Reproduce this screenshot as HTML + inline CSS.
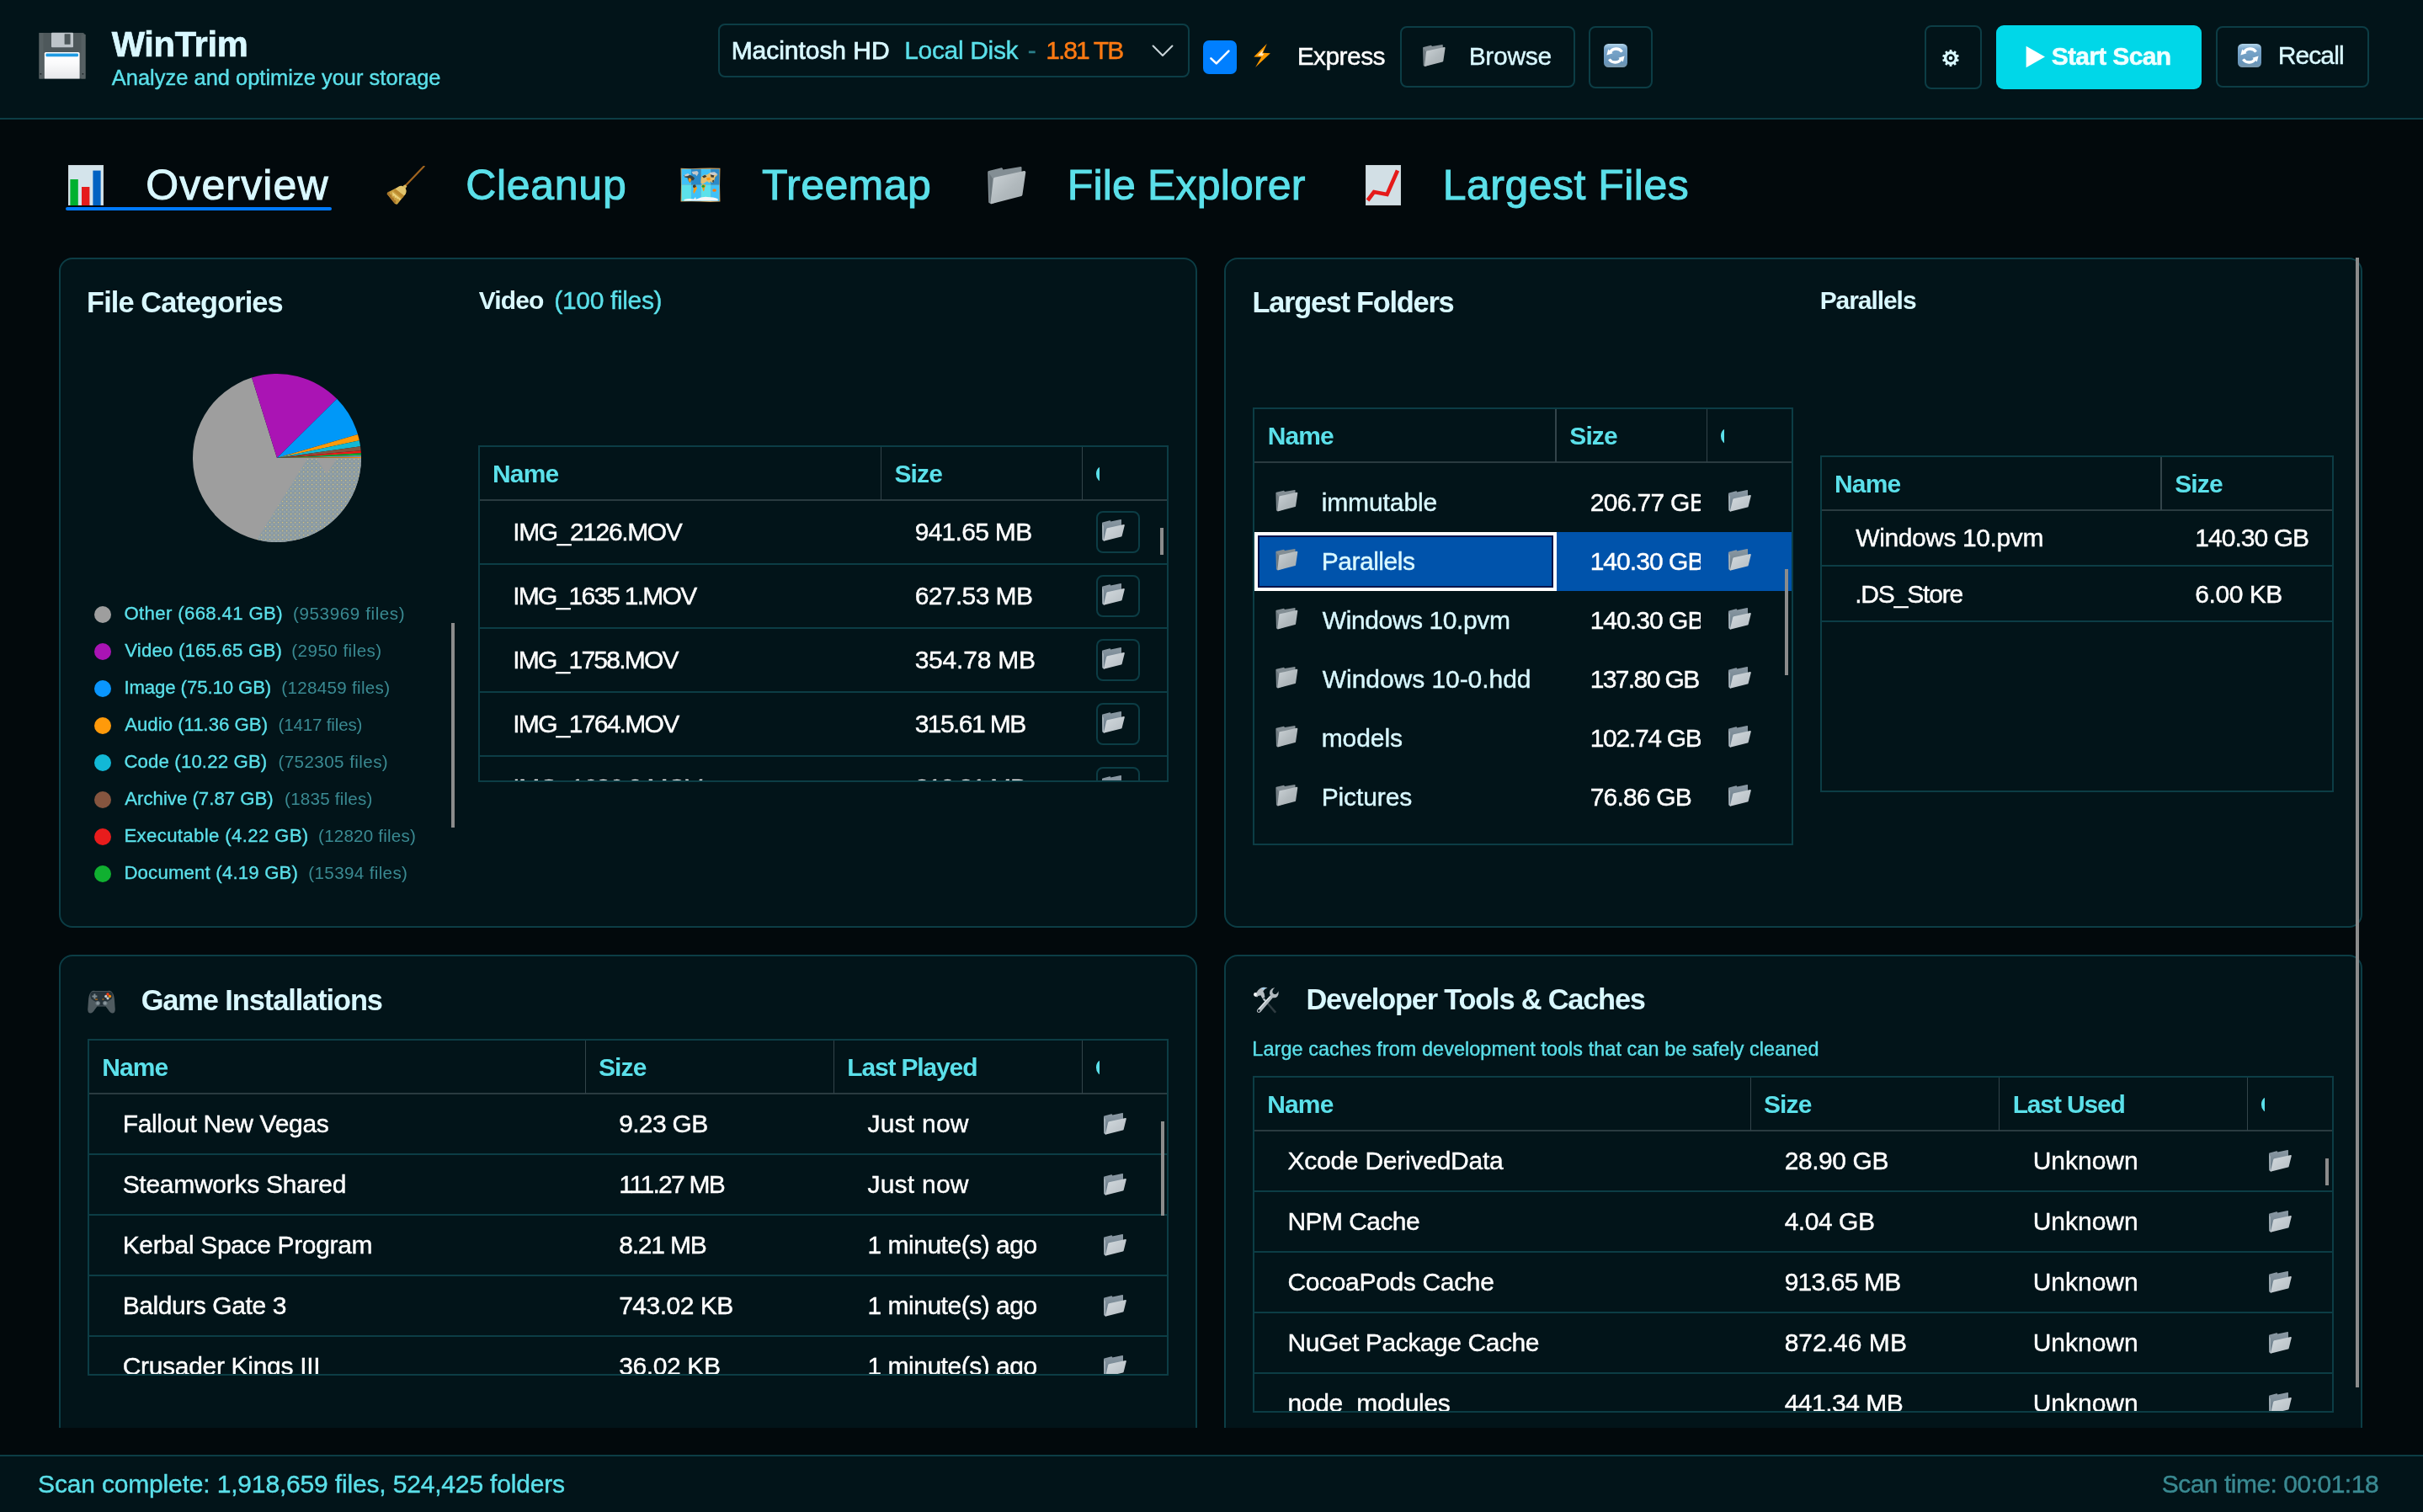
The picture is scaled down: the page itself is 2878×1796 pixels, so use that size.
<!DOCTYPE html>
<html lang="en"><head><meta charset="utf-8"><title>WinTrim</title>
<style>
html,body{margin:0;padding:0}
body{width:2878px;height:1796px;background:#02090c;font-family:"Liberation Sans", sans-serif;overflow:hidden;position:relative}
span{display:block}
</style></head>
<body>
<div style="position:absolute;left:0;top:0;width:2878px;height:1796px;will-change:transform">
<div style="position:absolute;left:0px;top:0px;width:2878px;height:140px;box-sizing:border-box;background:#021419;"></div>
<div style="position:absolute;left:0px;top:140px;width:2878px;height:2px;box-sizing:border-box;background:#0c3d45;"></div>
<svg style="position:absolute;left:46px;top:38px" width="56" height="56" viewBox="0 0 56 56" ><defs><linearGradient id="flg" x1="0" y1="0" x2="0" y2="1"><stop offset="0" stop-color="#ffffff"/><stop offset=".4" stop-color="#fbfbfc"/><stop offset="1" stop-color="#e6e8ea"/></linearGradient></defs>
<path d="M0.5,1 L53,1 L55.5,3.5 L55.5,55.5 L0.5,55.5 Z" fill="#4e585b"/>
<rect x="0.5" y="1" width="5" height="54.5" fill="#566063"/><rect x="50.5" y="3" width="5" height="52.5" fill="#566063"/>
<rect x="15" y="0.8" width="26" height="17.5" rx="1" fill="#bdc4c9"/>
<rect x="30.6" y="2.2" width="7" height="12.6" rx=".6" fill="#4e585b"/>
<path d="M6.8,25.6 Q6.8,24 8.4,24 L47,24 Q48.6,24 48.6,25.6 L48.6,55.5 L6.8,55.5 Z" fill="url(#flg)"/>
<rect x="8.4" y="25.6" width="38.6" height="3.6" rx="1.2" fill="#1f9be2"/>
<rect x="1.6" y="49" width="1.6" height="1.6" fill="#1c2326"/><rect x="51.6" y="49" width="1.6" height="1.6" fill="#1c2326"/></svg>
<div style="position:absolute;left:853px;top:28px;width:560px;height:64px;box-sizing:border-box;background:#021419;border:2px solid #0c3d45;border-radius:8px;"></div>
<svg style="position:absolute;left:1366px;top:50px" width="30" height="20" viewBox="0 0 30 20"><path d="M3.6,4.6 L15,16 L26.4,4.6" fill="none" stroke="#c9d4d8" stroke-width="2.1" stroke-linecap="round" stroke-linejoin="round"/></svg>
<div style="position:absolute;left:1429px;top:48px;width:40px;height:40px;box-sizing:border-box;background:#007fff;border-radius:7px;"></div>
<svg style="position:absolute;left:1429px;top:48px" width="40" height="40" viewBox="0 0 40 40"><path d="M9.4,21.4 L15.8,27.4 L30.4,12.6" fill="none" stroke="#fff" stroke-width="2.6" stroke-linecap="round" stroke-linejoin="round"/></svg>
<svg style="position:absolute;left:1488px;top:51px" width="22" height="30" viewBox="0 0 22 30" ><path d="M16.8,1.1 L1.3,16.6 L10.2,16.8 L3.1,29.1 L20.9,12.3 L12,11.8 Z" fill="#ff9a00"/>
<path d="M12.6,8 L6,15 L11.6,15.2 L13.4,12.8 L11,12.4 Z" fill="#ffe9c4"/></svg>
<div style="position:absolute;left:1663px;top:31px;width:208px;height:73px;box-sizing:border-box;background:#021419;border:2px solid #0c3d45;border-radius:8px;"></div>
<svg style="position:absolute;left:1690px;top:53px" width="27" height="27" viewBox="0 0 46 46" ><defs><linearGradient id="fc1" x1="0" y1="0" x2="1" y2="1"><stop offset="0" stop-color="#ccd3d7"/><stop offset=".55" stop-color="#b1b9bd"/><stop offset="1" stop-color="#a3abaf"/></linearGradient></defs>
<path d="M0.2,6.4 Q0.2,5.2 1.4,4.9 L16.6,1.3 Q17.4,1.2 17.7,1.9 L18.4,3.5 L39.4,0.1 Q40.4,0 40.5,1 L40.6,31 L4.2,44.4 L1.2,42.4 Z" fill="#838e94"/>
<path d="M2,8 L2.6,41.6 L4.6,43.2 L6,14 Z" fill="#6c777d"/>
<path d="M7,14.6 Q7,13.2 8.4,12.8 L43.4,5 Q45.5,4.8 45.3,6.8 L41.4,33.4 Q41.2,34.6 40,35 L5.2,43.9 Q3.4,44.2 3.6,42.4 Z" fill="url(#fc1)"/></svg>
<div style="position:absolute;left:1887px;top:31px;width:76px;height:74px;box-sizing:border-box;background:#021419;border:2px solid #0c3d45;border-radius:8px;"></div>
<svg style="position:absolute;left:1905px;top:52px" width="28" height="28" viewBox="0 0 28 28" ><defs><linearGradient id="rf2" x1="0" y1="0" x2="0" y2="1"><stop offset="0" stop-color="#b4d6ea"/><stop offset=".22" stop-color="#7ba7cc"/><stop offset=".8" stop-color="#6895ba"/><stop offset="1" stop-color="#7a98ac"/></linearGradient></defs>
<rect x="0" y="0" width="28" height="28" rx="5.5" fill="url(#rf2)"/>
<path d="M7.2,10.6 A8.4,8.4 0 0 1 21.6,9.6" fill="none" stroke="#fff" stroke-width="3.3"/>
<path d="M3.4,13.6 L5.2,6.4 L10.6,11.2 Z" fill="#fff"/>
<path d="M20.8,17.4 A8.4,8.4 0 0 1 6.4,18.4" fill="none" stroke="#fff" stroke-width="3.3"/>
<path d="M24.6,14.4 L22.8,21.6 L17.4,16.8 Z" fill="#fff"/></svg>
<div style="position:absolute;left:2286px;top:30px;width:68px;height:76px;box-sizing:border-box;background:#021419;border:2px solid #0c3d45;border-radius:8px;"></div>
<svg style="position:absolute;left:2306.3px;top:58px" width="22" height="22" viewBox="0 0 22 22" ><path d="M9.53,3.34 L9.70,1.08 L12.30,1.08 L12.47,3.34 L14.31,3.94 L15.78,2.22 L17.88,3.74 L16.69,5.67 L17.83,7.23 L20.03,6.70 L20.83,9.17 L18.74,10.03 L18.74,11.97 L20.83,12.83 L20.03,15.30 L17.83,14.77 L16.69,16.33 L17.88,18.26 L15.78,19.78 L14.31,18.06 L12.47,18.66 L12.30,20.92 L9.70,20.92 L9.53,18.66 L7.69,18.06 L6.22,19.78 L4.12,18.26 L5.31,16.33 L4.17,14.77 L1.97,15.30 L1.17,12.83 L3.26,11.97 L3.26,10.03 L1.17,9.17 L1.97,6.70 L4.17,7.23 L5.31,5.67 L4.12,3.74 L6.22,2.22 L7.69,3.94 Z" fill="#d9f8ff"/><circle cx="11" cy="11" r="7.8" fill="#d9f8ff"/><circle cx="11" cy="11" r="4.7" fill="#021419"/><circle cx="11" cy="11" r="2.3" fill="#d9f8ff"/></svg>
<div style="position:absolute;left:2371px;top:30px;width:244px;height:76px;box-sizing:border-box;background:#00d7e8;border-radius:9px;"></div>
<svg style="position:absolute;left:2406px;top:54px" width="24" height="27" viewBox="0 0 24 27"><path d="M0.6,0.8 L23,13.5 L0.6,26.2 Z" fill="#fff"/></svg>
<div style="position:absolute;left:2632px;top:31px;width:182px;height:73px;box-sizing:border-box;background:#021419;border:2px solid #0c3d45;border-radius:8px;"></div>
<svg style="position:absolute;left:2658px;top:52px" width="28" height="28" viewBox="0 0 28 28" ><defs><linearGradient id="rf3" x1="0" y1="0" x2="0" y2="1"><stop offset="0" stop-color="#b4d6ea"/><stop offset=".22" stop-color="#7ba7cc"/><stop offset=".8" stop-color="#6895ba"/><stop offset="1" stop-color="#7a98ac"/></linearGradient></defs>
<rect x="0" y="0" width="28" height="28" rx="5.5" fill="url(#rf3)"/>
<path d="M7.2,10.6 A8.4,8.4 0 0 1 21.6,9.6" fill="none" stroke="#fff" stroke-width="3.3"/>
<path d="M3.4,13.6 L5.2,6.4 L10.6,11.2 Z" fill="#fff"/>
<path d="M20.8,17.4 A8.4,8.4 0 0 1 6.4,18.4" fill="none" stroke="#fff" stroke-width="3.3"/>
<path d="M24.6,14.4 L22.8,21.6 L17.4,16.8 Z" fill="#fff"/></svg>
<svg style="position:absolute;left:81px;top:196px" width="42" height="48" viewBox="0 0 42 48" ><rect x="0" y="0" width="42" height="48" fill="#d4e4eb"/>
<rect x="0" y="0" width="42" height="48" fill="none" stroke="#c2ccd0" stroke-width="1.4"/>
<rect x="2.4" y="17" width="9.4" height="31" fill="#00b12f"/>
<rect x="16" y="26" width="9.4" height="22" fill="#e51c1c"/>
<rect x="29.4" y="6.6" width="9.2" height="41.4" fill="#0062c2"/></svg>
<div style="position:absolute;left:78px;top:246px;width:316px;height:4px;box-sizing:border-box;background:#007aff;border-radius:2px;"></div>
<svg style="position:absolute;left:459px;top:197px" width="46" height="46" viewBox="0 0 46 46" ><path d="M44.6,0.6 L22.6,23.6" stroke="#a2651f" stroke-width="2.2" stroke-linecap="round" fill="none"/>
<path d="M22.2,22.2 L24.4,24.6 L22.4,27 L19.4,24 Z" fill="#dcb95e"/>
<path d="M15,24.4 Q19,22.6 22.4,26.6 Q24.4,30 22.6,33.6 L13,45.6 Q11,45.8 9.6,44.4 L0.8,33.4 Q0.6,32 1.6,31.4 Z" fill="#caa040"/>
<path d="M15,24.4 Q19,22.6 22.4,26.6 Q24.4,30 22.6,33.6 L21,35.4 L10.6,27.4 Z" fill="#e2c56e"/>
<path d="M10.6,27.4 L21,35.4 L18.8,38.4 L8.2,29.8 Z" fill="#bb8a30"/>
<path d="M7,31 L17.6,39.8 L15,41 L14.4,39 L12.6,39.6 L12,37.4 L10,38 L9.6,35.6 L7.6,36 Z" fill="#ecd27c"/>
<path d="M1.6,31.4 L3,30.6 L4.4,34 L6,34.4 L6.4,37.4 L8.4,37.8 L9,40.6 L11,41 L11.4,43.6 L9.6,44.4 L0.8,33.4 Z" fill="#a8742a"/></svg>
<svg style="position:absolute;left:808px;top:199.4px" width="48" height="41.4" viewBox="0 0 48 42" ><path d="M0.2,0.8 Q12,1.6 24,0.8 Q36,0.2 47.8,0.8 Q47,21 47.8,41.2 Q36,41.8 24,41.2 Q12,40.6 0.2,41.2 Q1,21 0.2,0.8 Z" fill="#cf9a52"/>
<rect x="1.2" y="1.8" width="11.6" height="19.2" fill="#3fc1f9"/><rect x="12.8" y="1.8" width="12" height="19.2" fill="#2a8ac8"/>
<rect x="24.8" y="1.8" width="11.6" height="19.2" fill="#3fc1f9"/><rect x="36.4" y="1.8" width="10.4" height="19.2" fill="#2a8ac8"/>
<rect x="1.2" y="21" width="11.6" height="19.4" fill="#5ce1ea"/><rect x="12.8" y="21" width="12" height="19.4" fill="#3fc1f9"/>
<rect x="24.8" y="21" width="11.6" height="19.4" fill="#5ce1ea"/><rect x="36.4" y="21" width="10.4" height="19.4" fill="#3fc1f9"/>
<path d="M4,9.4 L8,8 L11,8.6 L15,11 L17,13 L15.4,15.6 L13,15.4 L11.4,18.6 L9.6,16 L8.4,12.4 L5,11.6 Z" fill="#35403f"/>
<path d="M9.4,13 L12,12.6 L13,15 L11.2,18.2 L9.8,16 Z" fill="#ff9a16"/>
<path d="M5,8.6 L9,7 L11.4,8.8 L8,10.4 L4.6,10.6 Z" fill="#c9cdd0"/>
<path d="M13.4,5 L20,4 L21.8,6.4 L19.6,10.4 L17.8,8.4 L15,8 Z" fill="#c3c7ca"/>
<path d="M15.4,21.4 L18,21 L20,24.6 L18,28.6 L16,31.6 L15.2,29 L16,26 L14.8,23.6 Z" fill="#ff9a16"/>
<path d="M15.2,21 L17.8,20.6 L18.8,23.4 L16,24.6 L14.8,23 Z" fill="#353c3a"/>
<path d="M25,11.4 L28,9 L32,8.6 L35,6.6 L40,7.6 L44.6,9 L41.6,11.6 L40.6,16 L38,18.6 L36.6,16.4 L34.6,18.6 L32,16.6 L29,18.6 L26.6,20 L24.4,18.6 L24.6,15 Z" fill="#e4bf72"/>
<path d="M26,10.6 L29.6,9 L31.6,11 L28,12.6 Z M36,8 L40.6,8.6 L40,12 L36.8,11.6 Z M38,16 L40.6,14.6 L39.4,18.4 Z" fill="#3b3a33"/>
<path d="M31,12.4 L35.6,12 L36,15 L32,15.6 Z" fill="#ff9a16"/>
<path d="M35,6 L41,5.4 L45,8.4 L40,9.4 L36,8.4 Z" fill="#c9cdd0"/>
<path d="M25.6,20.6 L29.6,20.4 L30.4,22.4 L29,24.4 L28.6,27.6 L27.4,28.6 L26.6,25.6 L25.4,23 Z" fill="#ff9a16"/>
<circle cx="27.4" cy="22.6" r="1.6" fill="#0aa53a"/>
<ellipse cx="40.8" cy="27.4" rx="2.4" ry="1.9" fill="#ff7a10"/>
<path d="M4.4,38.6 Q10,36.6 16,38 L18,35.6 L18.6,38.4 Q26,34.8 32,35.4 Q40,35.4 45,37.8 L45,40 L4,40 Z" fill="#f4f6f7"/></svg>
<svg style="position:absolute;left:1173px;top:198px" width="46" height="46" viewBox="0 0 46 46" ><defs><linearGradient id="fc4" x1="0" y1="0" x2="1" y2="1"><stop offset="0" stop-color="#ccd3d7"/><stop offset=".55" stop-color="#b1b9bd"/><stop offset="1" stop-color="#a3abaf"/></linearGradient></defs>
<path d="M0.2,6.4 Q0.2,5.2 1.4,4.9 L16.6,1.3 Q17.4,1.2 17.7,1.9 L18.4,3.5 L39.4,0.1 Q40.4,0 40.5,1 L40.6,31 L4.2,44.4 L1.2,42.4 Z" fill="#838e94"/>
<path d="M2,8 L2.6,41.6 L4.6,43.2 L6,14 Z" fill="#6c777d"/>
<path d="M7,14.6 Q7,13.2 8.4,12.8 L43.4,5 Q45.5,4.8 45.3,6.8 L41.4,33.4 Q41.2,34.6 40,35 L5.2,43.9 Q3.4,44.2 3.6,42.4 Z" fill="url(#fc4)"/></svg>
<svg style="position:absolute;left:1621.5px;top:196px" width="42" height="48" viewBox="0 0 42 48" ><rect x="0" y="0" width="42" height="48" fill="#d2dfe5"/>
<rect x="0" y="0" width="42" height="48" fill="none" stroke="#c2ccd0" stroke-width="1.4"/>
<path d="M2.5,42 L10,32 L25.5,35 L38,6.5" fill="none" stroke="#e51a1a" stroke-width="4.6" stroke-linejoin="miter" stroke-linecap="butt"/></svg>
<div style="position:absolute;left:70px;top:306px;width:1352px;height:796px;box-sizing:border-box;background:#021419;border:2px solid #0c3d45;border-radius:16px;"></div>
<div style="position:absolute;left:1454px;top:306px;width:1352px;height:796px;box-sizing:border-box;background:#021419;border:2px solid #0c3d45;border-radius:16px;"></div>
<div style="position:absolute;left:70px;top:1134px;width:1352px;height:640px;box-sizing:border-box;background:#021419;border:2px solid #0c3d45;border-radius:16px;"></div>
<div style="position:absolute;left:1454px;top:1134px;width:1352px;height:640px;box-sizing:border-box;background:#021419;border:2px solid #0c3d45;border-radius:16px;"></div>
<svg style="position:absolute;left:227.10000000000002px;top:441.70000000000005px" width="204" height="204" viewBox="-102 -102 204 204"><defs><pattern id="dots" width="5" height="5" patternUnits="userSpaceOnUse"><rect width="5" height="5" fill="#8c9ba1"/><rect x="1" y="1" width="1.2" height="1.2" fill="#d8c27a"/><rect x="3.5" y="3.5" width="1" height="1" fill="#b4c0c4"/></pattern><clipPath id="pc"><circle cx="0" cy="0" r="100"/></clipPath></defs><path d="M0,0 L100.00,0.00 A100,100 0 1 1 -29.90,-95.42 Z" fill="#9e9e9e"/><path d="M0,0 L-29.90,-95.42 A100,100 0 0 1 71.20,-70.22 Z" fill="#aa14b4"/><path d="M0,0 L71.20,-70.22 A100,100 0 0 1 95.98,-28.07 Z" fill="#0098f8"/><path d="M0,0 L95.98,-28.07 A100,100 0 0 1 97.81,-20.79 Z" fill="#ff9a0a"/><path d="M0,0 L97.81,-20.79 A100,100 0 0 1 99.04,-13.83 Z" fill="#12b8d6"/><path d="M0,0 L99.04,-13.83 A100,100 0 0 1 99.62,-8.72 Z" fill="#85553f"/><path d="M0,0 L99.62,-8.72 A100,100 0 0 1 99.83,-5.76 Z" fill="#f01a1a"/><path d="M0,0 L99.83,-5.76 A100,100 0 0 1 99.95,-3.32 Z" fill="#10b030"/><path d="M0,0 L99.95,-3.32 A100,100 0 0 1 99.99,-1.05 Z" fill="#6f8f9c"/><path d="M0,0 L99.99,-1.05 A100,100 0 0 1 100.00,-0.00 Z" fill="#ff8a00"/><path clip-path="url(#pc)" d="M36.4,0.6 L46.6,0.6 L59,18.8 L71.3,0.6 L102,0.6 L102,102 L-27,102 Z" fill="url(#dots)"/></svg>
<div style="position:absolute;left:112px;top:719.7px;width:20px;height:20px;box-sizing:border-box;background:#9e9e9e;border-radius:10px;"></div>
<div style="position:absolute;left:112px;top:763.7px;width:20px;height:20px;box-sizing:border-box;background:#aa14b4;border-radius:10px;"></div>
<div style="position:absolute;left:112px;top:807.7px;width:20px;height:20px;box-sizing:border-box;background:#0a96ff;border-radius:10px;"></div>
<div style="position:absolute;left:112px;top:851.7px;width:20px;height:20px;box-sizing:border-box;background:#ff9a0a;border-radius:10px;"></div>
<div style="position:absolute;left:112px;top:895.7px;width:20px;height:20px;box-sizing:border-box;background:#12b8d6;border-radius:10px;"></div>
<div style="position:absolute;left:112px;top:939.7px;width:20px;height:20px;box-sizing:border-box;background:#85553f;border-radius:10px;"></div>
<div style="position:absolute;left:112px;top:983.7px;width:20px;height:20px;box-sizing:border-box;background:#e81c1c;border-radius:10px;"></div>
<div style="position:absolute;left:112px;top:1027.7px;width:20px;height:20px;box-sizing:border-box;background:#10b030;border-radius:10px;"></div>
<div style="position:absolute;left:536px;top:740px;width:4px;height:243px;box-sizing:border-box;background:#8c8c8c;"></div>
<div style="position:absolute;left:568px;top:529px;width:820px;height:400px;box-sizing:border-box;border:2px solid #0c3d45;"></div>
<div style="position:absolute;left:570px;top:593px;width:816px;height:2px;box-sizing:border-box;background:#2a3b40;"></div>
<div style="position:absolute;left:1045.7px;top:531px;width:1.5px;height:63px;box-sizing:border-box;background:#33444a;"></div>
<div style="position:absolute;left:1284.7px;top:531px;width:1.5px;height:63px;box-sizing:border-box;background:#33444a;"></div>
<div style="position:absolute;left:570px;top:595px;width:816px;height:332px;overflow:hidden">
<div style="position:absolute;left:732px;top:12px;width:52px;height:50px;box-sizing:border-box;border:2px solid #0c3d45;border-radius:8px;"></div>
<svg style="position:absolute;left:739px;top:22px" width="27" height="26" viewBox="0 0 27 26" ><defs><linearGradient id="fo5" x1="0" y1="0" x2="1" y2="1"><stop offset="0" stop-color="#d3dade"/><stop offset="1" stop-color="#b4bcc2"/></linearGradient>
<linearGradient id="fb5" x1="0" y1="0" x2="0" y2="1"><stop offset="0" stop-color="#8c9aa4"/><stop offset="1" stop-color="#627684"/></linearGradient></defs>
<path d="M0,4.4 Q0,3.7 .7,3.5 L9.2,1.3 Q9.8,1.2 10,1.8 L10.3,2.6 L22.2,0.1 Q23,0 23,.8 L23,12 L2.2,25.7 L0.3,24.3 Z" fill="url(#fb5)"/>
<path d="M0.3,5 L0.5,24 L2,25.4 L1.8,8 Z" fill="#aeb9c0"/>
<path d="M5.2,11.4 Q5.4,10.5 6.3,10.3 L25.8,5.9 Q27,5.8 26.8,7 L23.7,19.4 Q23.5,20.2 22.7,20.4 L2.8,25.6 Q1.8,25.8 2,24.8 Z" fill="url(#fo5)"/></svg>
<div style="position:absolute;left:0px;top:74px;width:816px;height:2px;box-sizing:border-box;background:#0c3d45;"></div>
<div style="position:absolute;left:732px;top:88px;width:52px;height:50px;box-sizing:border-box;border:2px solid #0c3d45;border-radius:8px;"></div>
<svg style="position:absolute;left:739px;top:98px" width="27" height="26" viewBox="0 0 27 26" ><defs><linearGradient id="fo6" x1="0" y1="0" x2="1" y2="1"><stop offset="0" stop-color="#d3dade"/><stop offset="1" stop-color="#b4bcc2"/></linearGradient>
<linearGradient id="fb6" x1="0" y1="0" x2="0" y2="1"><stop offset="0" stop-color="#8c9aa4"/><stop offset="1" stop-color="#627684"/></linearGradient></defs>
<path d="M0,4.4 Q0,3.7 .7,3.5 L9.2,1.3 Q9.8,1.2 10,1.8 L10.3,2.6 L22.2,0.1 Q23,0 23,.8 L23,12 L2.2,25.7 L0.3,24.3 Z" fill="url(#fb6)"/>
<path d="M0.3,5 L0.5,24 L2,25.4 L1.8,8 Z" fill="#aeb9c0"/>
<path d="M5.2,11.4 Q5.4,10.5 6.3,10.3 L25.8,5.9 Q27,5.8 26.8,7 L23.7,19.4 Q23.5,20.2 22.7,20.4 L2.8,25.6 Q1.8,25.8 2,24.8 Z" fill="url(#fo6)"/></svg>
<div style="position:absolute;left:0px;top:150px;width:816px;height:2px;box-sizing:border-box;background:#0c3d45;"></div>
<div style="position:absolute;left:732px;top:164px;width:52px;height:50px;box-sizing:border-box;border:2px solid #0c3d45;border-radius:8px;"></div>
<svg style="position:absolute;left:739px;top:174px" width="27" height="26" viewBox="0 0 27 26" ><defs><linearGradient id="fo7" x1="0" y1="0" x2="1" y2="1"><stop offset="0" stop-color="#d3dade"/><stop offset="1" stop-color="#b4bcc2"/></linearGradient>
<linearGradient id="fb7" x1="0" y1="0" x2="0" y2="1"><stop offset="0" stop-color="#8c9aa4"/><stop offset="1" stop-color="#627684"/></linearGradient></defs>
<path d="M0,4.4 Q0,3.7 .7,3.5 L9.2,1.3 Q9.8,1.2 10,1.8 L10.3,2.6 L22.2,0.1 Q23,0 23,.8 L23,12 L2.2,25.7 L0.3,24.3 Z" fill="url(#fb7)"/>
<path d="M0.3,5 L0.5,24 L2,25.4 L1.8,8 Z" fill="#aeb9c0"/>
<path d="M5.2,11.4 Q5.4,10.5 6.3,10.3 L25.8,5.9 Q27,5.8 26.8,7 L23.7,19.4 Q23.5,20.2 22.7,20.4 L2.8,25.6 Q1.8,25.8 2,24.8 Z" fill="url(#fo7)"/></svg>
<div style="position:absolute;left:0px;top:226px;width:816px;height:2px;box-sizing:border-box;background:#0c3d45;"></div>
<div style="position:absolute;left:732px;top:240px;width:52px;height:50px;box-sizing:border-box;border:2px solid #0c3d45;border-radius:8px;"></div>
<svg style="position:absolute;left:739px;top:250px" width="27" height="26" viewBox="0 0 27 26" ><defs><linearGradient id="fo8" x1="0" y1="0" x2="1" y2="1"><stop offset="0" stop-color="#d3dade"/><stop offset="1" stop-color="#b4bcc2"/></linearGradient>
<linearGradient id="fb8" x1="0" y1="0" x2="0" y2="1"><stop offset="0" stop-color="#8c9aa4"/><stop offset="1" stop-color="#627684"/></linearGradient></defs>
<path d="M0,4.4 Q0,3.7 .7,3.5 L9.2,1.3 Q9.8,1.2 10,1.8 L10.3,2.6 L22.2,0.1 Q23,0 23,.8 L23,12 L2.2,25.7 L0.3,24.3 Z" fill="url(#fb8)"/>
<path d="M0.3,5 L0.5,24 L2,25.4 L1.8,8 Z" fill="#aeb9c0"/>
<path d="M5.2,11.4 Q5.4,10.5 6.3,10.3 L25.8,5.9 Q27,5.8 26.8,7 L23.7,19.4 Q23.5,20.2 22.7,20.4 L2.8,25.6 Q1.8,25.8 2,24.8 Z" fill="url(#fo8)"/></svg>
<div style="position:absolute;left:0px;top:302px;width:816px;height:2px;box-sizing:border-box;background:#0c3d45;"></div>
<div style="position:absolute;left:732px;top:316px;width:52px;height:50px;box-sizing:border-box;border:2px solid #0c3d45;border-radius:8px;"></div>
<svg style="position:absolute;left:739px;top:326px" width="27" height="26" viewBox="0 0 27 26" ><defs><linearGradient id="fo9" x1="0" y1="0" x2="1" y2="1"><stop offset="0" stop-color="#d3dade"/><stop offset="1" stop-color="#b4bcc2"/></linearGradient>
<linearGradient id="fb9" x1="0" y1="0" x2="0" y2="1"><stop offset="0" stop-color="#8c9aa4"/><stop offset="1" stop-color="#627684"/></linearGradient></defs>
<path d="M0,4.4 Q0,3.7 .7,3.5 L9.2,1.3 Q9.8,1.2 10,1.8 L10.3,2.6 L22.2,0.1 Q23,0 23,.8 L23,12 L2.2,25.7 L0.3,24.3 Z" fill="url(#fb9)"/>
<path d="M0.3,5 L0.5,24 L2,25.4 L1.8,8 Z" fill="#aeb9c0"/>
<path d="M5.2,11.4 Q5.4,10.5 6.3,10.3 L25.8,5.9 Q27,5.8 26.8,7 L23.7,19.4 Q23.5,20.2 22.7,20.4 L2.8,25.6 Q1.8,25.8 2,24.8 Z" fill="url(#fo9)"/></svg>
</div>
<div style="position:absolute;left:1378px;top:627px;width:4px;height:32px;box-sizing:border-box;background:#8c8c8c;"></div>
<div style="position:absolute;left:1488px;top:484px;width:642px;height:520px;box-sizing:border-box;border:2px solid #0c3d45;"></div>
<div style="position:absolute;left:1490px;top:548px;width:638px;height:2px;box-sizing:border-box;background:#2a3b40;"></div>
<div style="position:absolute;left:1847.4px;top:486px;width:1.5px;height:63px;box-sizing:border-box;background:#33444a;"></div>
<div style="position:absolute;left:2026.7px;top:486px;width:1.5px;height:63px;box-sizing:border-box;background:#33444a;"></div>
<svg style="position:absolute;left:1514.6px;top:581.8px" width="27" height="26.4" viewBox="0 0 46 46" ><defs><linearGradient id="fc10" x1="0" y1="0" x2="1" y2="1"><stop offset="0" stop-color="#ccd3d7"/><stop offset=".55" stop-color="#b1b9bd"/><stop offset="1" stop-color="#a3abaf"/></linearGradient></defs>
<path d="M0.2,6.4 Q0.2,5.2 1.4,4.9 L16.6,1.3 Q17.4,1.2 17.7,1.9 L18.4,3.5 L39.4,0.1 Q40.4,0 40.5,1 L40.6,31 L4.2,44.4 L1.2,42.4 Z" fill="#838e94"/>
<path d="M2,8 L2.6,41.6 L4.6,43.2 L6,14 Z" fill="#6c777d"/>
<path d="M7,14.6 Q7,13.2 8.4,12.8 L43.4,5 Q45.5,4.8 45.3,6.8 L41.4,33.4 Q41.2,34.6 40,35 L5.2,43.9 Q3.4,44.2 3.6,42.4 Z" fill="url(#fc10)"/></svg>
<svg style="position:absolute;left:2053px;top:581.6px" width="27" height="26" viewBox="0 0 27 26" ><defs><linearGradient id="fo11" x1="0" y1="0" x2="1" y2="1"><stop offset="0" stop-color="#d3dade"/><stop offset="1" stop-color="#b4bcc2"/></linearGradient>
<linearGradient id="fb11" x1="0" y1="0" x2="0" y2="1"><stop offset="0" stop-color="#8c9aa4"/><stop offset="1" stop-color="#627684"/></linearGradient></defs>
<path d="M0,4.4 Q0,3.7 .7,3.5 L9.2,1.3 Q9.8,1.2 10,1.8 L10.3,2.6 L22.2,0.1 Q23,0 23,.8 L23,12 L2.2,25.7 L0.3,24.3 Z" fill="url(#fb11)"/>
<path d="M0.3,5 L0.5,24 L2,25.4 L1.8,8 Z" fill="#aeb9c0"/>
<path d="M5.2,11.4 Q5.4,10.5 6.3,10.3 L25.8,5.9 Q27,5.8 26.8,7 L23.7,19.4 Q23.5,20.2 22.7,20.4 L2.8,25.6 Q1.8,25.8 2,24.8 Z" fill="url(#fo11)"/></svg>
<div style="position:absolute;left:1490px;top:632px;width:638px;height:70px;box-sizing:border-box;background:#0053ab;"></div>
<div style="position:absolute;left:1490px;top:632px;width:358.6px;height:70px;box-sizing:border-box;border:4px solid #fff;"></div>
<div style="position:absolute;left:1494px;top:636px;width:350.6px;height:62px;box-sizing:border-box;border:2px solid #03134a;"></div>
<svg style="position:absolute;left:1514.6px;top:651.8px" width="27" height="26.4" viewBox="0 0 46 46" ><defs><linearGradient id="fc12" x1="0" y1="0" x2="1" y2="1"><stop offset="0" stop-color="#ccd3d7"/><stop offset=".55" stop-color="#b1b9bd"/><stop offset="1" stop-color="#a3abaf"/></linearGradient></defs>
<path d="M0.2,6.4 Q0.2,5.2 1.4,4.9 L16.6,1.3 Q17.4,1.2 17.7,1.9 L18.4,3.5 L39.4,0.1 Q40.4,0 40.5,1 L40.6,31 L4.2,44.4 L1.2,42.4 Z" fill="#838e94"/>
<path d="M2,8 L2.6,41.6 L4.6,43.2 L6,14 Z" fill="#6c777d"/>
<path d="M7,14.6 Q7,13.2 8.4,12.8 L43.4,5 Q45.5,4.8 45.3,6.8 L41.4,33.4 Q41.2,34.6 40,35 L5.2,43.9 Q3.4,44.2 3.6,42.4 Z" fill="url(#fc12)"/></svg>
<svg style="position:absolute;left:2053px;top:651.6px" width="27" height="26" viewBox="0 0 27 26" ><defs><linearGradient id="fo13" x1="0" y1="0" x2="1" y2="1"><stop offset="0" stop-color="#d3dade"/><stop offset="1" stop-color="#b4bcc2"/></linearGradient>
<linearGradient id="fb13" x1="0" y1="0" x2="0" y2="1"><stop offset="0" stop-color="#8c9aa4"/><stop offset="1" stop-color="#627684"/></linearGradient></defs>
<path d="M0,4.4 Q0,3.7 .7,3.5 L9.2,1.3 Q9.8,1.2 10,1.8 L10.3,2.6 L22.2,0.1 Q23,0 23,.8 L23,12 L2.2,25.7 L0.3,24.3 Z" fill="url(#fb13)"/>
<path d="M0.3,5 L0.5,24 L2,25.4 L1.8,8 Z" fill="#aeb9c0"/>
<path d="M5.2,11.4 Q5.4,10.5 6.3,10.3 L25.8,5.9 Q27,5.8 26.8,7 L23.7,19.4 Q23.5,20.2 22.7,20.4 L2.8,25.6 Q1.8,25.8 2,24.8 Z" fill="url(#fo13)"/></svg>
<svg style="position:absolute;left:1514.6px;top:721.8px" width="27" height="26.4" viewBox="0 0 46 46" ><defs><linearGradient id="fc14" x1="0" y1="0" x2="1" y2="1"><stop offset="0" stop-color="#ccd3d7"/><stop offset=".55" stop-color="#b1b9bd"/><stop offset="1" stop-color="#a3abaf"/></linearGradient></defs>
<path d="M0.2,6.4 Q0.2,5.2 1.4,4.9 L16.6,1.3 Q17.4,1.2 17.7,1.9 L18.4,3.5 L39.4,0.1 Q40.4,0 40.5,1 L40.6,31 L4.2,44.4 L1.2,42.4 Z" fill="#838e94"/>
<path d="M2,8 L2.6,41.6 L4.6,43.2 L6,14 Z" fill="#6c777d"/>
<path d="M7,14.6 Q7,13.2 8.4,12.8 L43.4,5 Q45.5,4.8 45.3,6.8 L41.4,33.4 Q41.2,34.6 40,35 L5.2,43.9 Q3.4,44.2 3.6,42.4 Z" fill="url(#fc14)"/></svg>
<svg style="position:absolute;left:2053px;top:721.6px" width="27" height="26" viewBox="0 0 27 26" ><defs><linearGradient id="fo15" x1="0" y1="0" x2="1" y2="1"><stop offset="0" stop-color="#d3dade"/><stop offset="1" stop-color="#b4bcc2"/></linearGradient>
<linearGradient id="fb15" x1="0" y1="0" x2="0" y2="1"><stop offset="0" stop-color="#8c9aa4"/><stop offset="1" stop-color="#627684"/></linearGradient></defs>
<path d="M0,4.4 Q0,3.7 .7,3.5 L9.2,1.3 Q9.8,1.2 10,1.8 L10.3,2.6 L22.2,0.1 Q23,0 23,.8 L23,12 L2.2,25.7 L0.3,24.3 Z" fill="url(#fb15)"/>
<path d="M0.3,5 L0.5,24 L2,25.4 L1.8,8 Z" fill="#aeb9c0"/>
<path d="M5.2,11.4 Q5.4,10.5 6.3,10.3 L25.8,5.9 Q27,5.8 26.8,7 L23.7,19.4 Q23.5,20.2 22.7,20.4 L2.8,25.6 Q1.8,25.8 2,24.8 Z" fill="url(#fo15)"/></svg>
<svg style="position:absolute;left:1514.6px;top:791.8px" width="27" height="26.4" viewBox="0 0 46 46" ><defs><linearGradient id="fc16" x1="0" y1="0" x2="1" y2="1"><stop offset="0" stop-color="#ccd3d7"/><stop offset=".55" stop-color="#b1b9bd"/><stop offset="1" stop-color="#a3abaf"/></linearGradient></defs>
<path d="M0.2,6.4 Q0.2,5.2 1.4,4.9 L16.6,1.3 Q17.4,1.2 17.7,1.9 L18.4,3.5 L39.4,0.1 Q40.4,0 40.5,1 L40.6,31 L4.2,44.4 L1.2,42.4 Z" fill="#838e94"/>
<path d="M2,8 L2.6,41.6 L4.6,43.2 L6,14 Z" fill="#6c777d"/>
<path d="M7,14.6 Q7,13.2 8.4,12.8 L43.4,5 Q45.5,4.8 45.3,6.8 L41.4,33.4 Q41.2,34.6 40,35 L5.2,43.9 Q3.4,44.2 3.6,42.4 Z" fill="url(#fc16)"/></svg>
<svg style="position:absolute;left:2053px;top:791.6px" width="27" height="26" viewBox="0 0 27 26" ><defs><linearGradient id="fo17" x1="0" y1="0" x2="1" y2="1"><stop offset="0" stop-color="#d3dade"/><stop offset="1" stop-color="#b4bcc2"/></linearGradient>
<linearGradient id="fb17" x1="0" y1="0" x2="0" y2="1"><stop offset="0" stop-color="#8c9aa4"/><stop offset="1" stop-color="#627684"/></linearGradient></defs>
<path d="M0,4.4 Q0,3.7 .7,3.5 L9.2,1.3 Q9.8,1.2 10,1.8 L10.3,2.6 L22.2,0.1 Q23,0 23,.8 L23,12 L2.2,25.7 L0.3,24.3 Z" fill="url(#fb17)"/>
<path d="M0.3,5 L0.5,24 L2,25.4 L1.8,8 Z" fill="#aeb9c0"/>
<path d="M5.2,11.4 Q5.4,10.5 6.3,10.3 L25.8,5.9 Q27,5.8 26.8,7 L23.7,19.4 Q23.5,20.2 22.7,20.4 L2.8,25.6 Q1.8,25.8 2,24.8 Z" fill="url(#fo17)"/></svg>
<svg style="position:absolute;left:1514.6px;top:861.8px" width="27" height="26.4" viewBox="0 0 46 46" ><defs><linearGradient id="fc18" x1="0" y1="0" x2="1" y2="1"><stop offset="0" stop-color="#ccd3d7"/><stop offset=".55" stop-color="#b1b9bd"/><stop offset="1" stop-color="#a3abaf"/></linearGradient></defs>
<path d="M0.2,6.4 Q0.2,5.2 1.4,4.9 L16.6,1.3 Q17.4,1.2 17.7,1.9 L18.4,3.5 L39.4,0.1 Q40.4,0 40.5,1 L40.6,31 L4.2,44.4 L1.2,42.4 Z" fill="#838e94"/>
<path d="M2,8 L2.6,41.6 L4.6,43.2 L6,14 Z" fill="#6c777d"/>
<path d="M7,14.6 Q7,13.2 8.4,12.8 L43.4,5 Q45.5,4.8 45.3,6.8 L41.4,33.4 Q41.2,34.6 40,35 L5.2,43.9 Q3.4,44.2 3.6,42.4 Z" fill="url(#fc18)"/></svg>
<svg style="position:absolute;left:2053px;top:861.6px" width="27" height="26" viewBox="0 0 27 26" ><defs><linearGradient id="fo19" x1="0" y1="0" x2="1" y2="1"><stop offset="0" stop-color="#d3dade"/><stop offset="1" stop-color="#b4bcc2"/></linearGradient>
<linearGradient id="fb19" x1="0" y1="0" x2="0" y2="1"><stop offset="0" stop-color="#8c9aa4"/><stop offset="1" stop-color="#627684"/></linearGradient></defs>
<path d="M0,4.4 Q0,3.7 .7,3.5 L9.2,1.3 Q9.8,1.2 10,1.8 L10.3,2.6 L22.2,0.1 Q23,0 23,.8 L23,12 L2.2,25.7 L0.3,24.3 Z" fill="url(#fb19)"/>
<path d="M0.3,5 L0.5,24 L2,25.4 L1.8,8 Z" fill="#aeb9c0"/>
<path d="M5.2,11.4 Q5.4,10.5 6.3,10.3 L25.8,5.9 Q27,5.8 26.8,7 L23.7,19.4 Q23.5,20.2 22.7,20.4 L2.8,25.6 Q1.8,25.8 2,24.8 Z" fill="url(#fo19)"/></svg>
<svg style="position:absolute;left:1514.6px;top:931.8px" width="27" height="26.4" viewBox="0 0 46 46" ><defs><linearGradient id="fc20" x1="0" y1="0" x2="1" y2="1"><stop offset="0" stop-color="#ccd3d7"/><stop offset=".55" stop-color="#b1b9bd"/><stop offset="1" stop-color="#a3abaf"/></linearGradient></defs>
<path d="M0.2,6.4 Q0.2,5.2 1.4,4.9 L16.6,1.3 Q17.4,1.2 17.7,1.9 L18.4,3.5 L39.4,0.1 Q40.4,0 40.5,1 L40.6,31 L4.2,44.4 L1.2,42.4 Z" fill="#838e94"/>
<path d="M2,8 L2.6,41.6 L4.6,43.2 L6,14 Z" fill="#6c777d"/>
<path d="M7,14.6 Q7,13.2 8.4,12.8 L43.4,5 Q45.5,4.8 45.3,6.8 L41.4,33.4 Q41.2,34.6 40,35 L5.2,43.9 Q3.4,44.2 3.6,42.4 Z" fill="url(#fc20)"/></svg>
<svg style="position:absolute;left:2053px;top:931.6px" width="27" height="26" viewBox="0 0 27 26" ><defs><linearGradient id="fo21" x1="0" y1="0" x2="1" y2="1"><stop offset="0" stop-color="#d3dade"/><stop offset="1" stop-color="#b4bcc2"/></linearGradient>
<linearGradient id="fb21" x1="0" y1="0" x2="0" y2="1"><stop offset="0" stop-color="#8c9aa4"/><stop offset="1" stop-color="#627684"/></linearGradient></defs>
<path d="M0,4.4 Q0,3.7 .7,3.5 L9.2,1.3 Q9.8,1.2 10,1.8 L10.3,2.6 L22.2,0.1 Q23,0 23,.8 L23,12 L2.2,25.7 L0.3,24.3 Z" fill="url(#fb21)"/>
<path d="M0.3,5 L0.5,24 L2,25.4 L1.8,8 Z" fill="#aeb9c0"/>
<path d="M5.2,11.4 Q5.4,10.5 6.3,10.3 L25.8,5.9 Q27,5.8 26.8,7 L23.7,19.4 Q23.5,20.2 22.7,20.4 L2.8,25.6 Q1.8,25.8 2,24.8 Z" fill="url(#fo21)"/></svg>
<div style="position:absolute;left:2120px;top:676px;width:4px;height:126px;box-sizing:border-box;background:#8c8c8c;"></div>
<div style="position:absolute;left:2162px;top:541px;width:610px;height:400px;box-sizing:border-box;border:2px solid #0c3d45;"></div>
<div style="position:absolute;left:2164px;top:605px;width:606px;height:2px;box-sizing:border-box;background:#2a3b40;"></div>
<div style="position:absolute;left:2566.3999999999996px;top:543px;width:1.5px;height:63px;box-sizing:border-box;background:#33444a;"></div>
<div style="position:absolute;left:2164px;top:671px;width:606px;height:2px;box-sizing:border-box;background:#0c3d45;"></div>
<div style="position:absolute;left:2164px;top:737px;width:606px;height:2px;box-sizing:border-box;background:#0c3d45;"></div>
<svg style="position:absolute;left:104px;top:1176px" width="33" height="28" viewBox="0 0 33 28" ><path d="M5,1.6 Q6.6,0.4 9,1 L24,1 Q26.4,0.4 28,1.6 Q31,4 31.8,10 L32.8,23 Q32.6,27.6 29.6,27.6 Q27,27.6 24.6,23.6 L21.6,19.6 L11.4,19.6 L8.4,23.6 Q6,27.6 3.4,27.6 Q0.4,27.6 0.2,23 L1.2,10 Q2,4 5,1.6 Z" fill="#4f5b60"/>
<path d="M3.6,3.6 Q5.4,1.6 9,1.8 L24,1.8 Q27.6,1.6 29.4,3.6 Q30.6,7 28.6,10.4 Q25.6,13 21.6,14.4 L20.4,18.6 L12.6,18.6 L11.4,14.4 Q7.4,13 4.4,10.4 Q2.4,7 3.6,3.6 Z" fill="#26333a"/>
<circle cx="12.2" cy="15.6" r="2.7" fill="#6d7a80"/><circle cx="12.2" cy="15.6" r="1.5" fill="#8d9aa0"/>
<circle cx="20.8" cy="15.6" r="2.7" fill="#6d7a80"/><circle cx="20.8" cy="15.6" r="1.5" fill="#8d9aa0"/>
<path d="M7.4,4.4 L9.4,4.4 L9.4,6.4 L11.4,6.4 L11.4,8.4 L9.4,8.4 L9.4,10.4 L7.4,10.4 L7.4,8.4 L5.4,8.4 L5.4,6.4 L7.4,6.4 Z" fill="#7f8c92"/>
<circle cx="24" cy="5" r="1.7" fill="#ff3a10"/><circle cx="26.4" cy="7.4" r="1.7" fill="#ff8a00"/>
<circle cx="21.8" cy="7.4" r="1.6" fill="#c6cccf"/><circle cx="24" cy="9.8" r="1.6" fill="#c6cccf"/>
<rect x="9" y="10.6" width="3" height="1" fill="#d67a10"/><rect x="17.6" y="10.4" width="1.6" height="1.2" fill="#d67a10"/></svg>
<div style="position:absolute;left:104px;top:1234px;width:1284px;height:400px;box-sizing:border-box;border:2px solid #0c3d45;"></div>
<div style="position:absolute;left:106px;top:1298px;width:1280px;height:2px;box-sizing:border-box;background:#2a3b40;"></div>
<div style="position:absolute;left:694.7px;top:1236px;width:1.5px;height:63px;box-sizing:border-box;background:#33444a;"></div>
<div style="position:absolute;left:989.7px;top:1236px;width:1.5px;height:63px;box-sizing:border-box;background:#33444a;"></div>
<div style="position:absolute;left:1284.7px;top:1236px;width:1.5px;height:63px;box-sizing:border-box;background:#33444a;"></div>
<svg style="position:absolute;left:1310.5px;top:1321.6px" width="27" height="26" viewBox="0 0 27 26" ><defs><linearGradient id="fo22" x1="0" y1="0" x2="1" y2="1"><stop offset="0" stop-color="#d3dade"/><stop offset="1" stop-color="#b4bcc2"/></linearGradient>
<linearGradient id="fb22" x1="0" y1="0" x2="0" y2="1"><stop offset="0" stop-color="#8c9aa4"/><stop offset="1" stop-color="#627684"/></linearGradient></defs>
<path d="M0,4.4 Q0,3.7 .7,3.5 L9.2,1.3 Q9.8,1.2 10,1.8 L10.3,2.6 L22.2,0.1 Q23,0 23,.8 L23,12 L2.2,25.7 L0.3,24.3 Z" fill="url(#fb22)"/>
<path d="M0.3,5 L0.5,24 L2,25.4 L1.8,8 Z" fill="#aeb9c0"/>
<path d="M5.2,11.4 Q5.4,10.5 6.3,10.3 L25.8,5.9 Q27,5.8 26.8,7 L23.7,19.4 Q23.5,20.2 22.7,20.4 L2.8,25.6 Q1.8,25.8 2,24.8 Z" fill="url(#fo22)"/></svg>
<div style="position:absolute;left:106px;top:1370px;width:1280px;height:2px;box-sizing:border-box;background:#0c3d45;"></div>
<svg style="position:absolute;left:1310.5px;top:1393.6px" width="27" height="26" viewBox="0 0 27 26" ><defs><linearGradient id="fo23" x1="0" y1="0" x2="1" y2="1"><stop offset="0" stop-color="#d3dade"/><stop offset="1" stop-color="#b4bcc2"/></linearGradient>
<linearGradient id="fb23" x1="0" y1="0" x2="0" y2="1"><stop offset="0" stop-color="#8c9aa4"/><stop offset="1" stop-color="#627684"/></linearGradient></defs>
<path d="M0,4.4 Q0,3.7 .7,3.5 L9.2,1.3 Q9.8,1.2 10,1.8 L10.3,2.6 L22.2,0.1 Q23,0 23,.8 L23,12 L2.2,25.7 L0.3,24.3 Z" fill="url(#fb23)"/>
<path d="M0.3,5 L0.5,24 L2,25.4 L1.8,8 Z" fill="#aeb9c0"/>
<path d="M5.2,11.4 Q5.4,10.5 6.3,10.3 L25.8,5.9 Q27,5.8 26.8,7 L23.7,19.4 Q23.5,20.2 22.7,20.4 L2.8,25.6 Q1.8,25.8 2,24.8 Z" fill="url(#fo23)"/></svg>
<div style="position:absolute;left:106px;top:1442px;width:1280px;height:2px;box-sizing:border-box;background:#0c3d45;"></div>
<svg style="position:absolute;left:1310.5px;top:1465.6px" width="27" height="26" viewBox="0 0 27 26" ><defs><linearGradient id="fo24" x1="0" y1="0" x2="1" y2="1"><stop offset="0" stop-color="#d3dade"/><stop offset="1" stop-color="#b4bcc2"/></linearGradient>
<linearGradient id="fb24" x1="0" y1="0" x2="0" y2="1"><stop offset="0" stop-color="#8c9aa4"/><stop offset="1" stop-color="#627684"/></linearGradient></defs>
<path d="M0,4.4 Q0,3.7 .7,3.5 L9.2,1.3 Q9.8,1.2 10,1.8 L10.3,2.6 L22.2,0.1 Q23,0 23,.8 L23,12 L2.2,25.7 L0.3,24.3 Z" fill="url(#fb24)"/>
<path d="M0.3,5 L0.5,24 L2,25.4 L1.8,8 Z" fill="#aeb9c0"/>
<path d="M5.2,11.4 Q5.4,10.5 6.3,10.3 L25.8,5.9 Q27,5.8 26.8,7 L23.7,19.4 Q23.5,20.2 22.7,20.4 L2.8,25.6 Q1.8,25.8 2,24.8 Z" fill="url(#fo24)"/></svg>
<div style="position:absolute;left:106px;top:1514px;width:1280px;height:2px;box-sizing:border-box;background:#0c3d45;"></div>
<svg style="position:absolute;left:1310.5px;top:1537.6px" width="27" height="26" viewBox="0 0 27 26" ><defs><linearGradient id="fo25" x1="0" y1="0" x2="1" y2="1"><stop offset="0" stop-color="#d3dade"/><stop offset="1" stop-color="#b4bcc2"/></linearGradient>
<linearGradient id="fb25" x1="0" y1="0" x2="0" y2="1"><stop offset="0" stop-color="#8c9aa4"/><stop offset="1" stop-color="#627684"/></linearGradient></defs>
<path d="M0,4.4 Q0,3.7 .7,3.5 L9.2,1.3 Q9.8,1.2 10,1.8 L10.3,2.6 L22.2,0.1 Q23,0 23,.8 L23,12 L2.2,25.7 L0.3,24.3 Z" fill="url(#fb25)"/>
<path d="M0.3,5 L0.5,24 L2,25.4 L1.8,8 Z" fill="#aeb9c0"/>
<path d="M5.2,11.4 Q5.4,10.5 6.3,10.3 L25.8,5.9 Q27,5.8 26.8,7 L23.7,19.4 Q23.5,20.2 22.7,20.4 L2.8,25.6 Q1.8,25.8 2,24.8 Z" fill="url(#fo25)"/></svg>
<div style="position:absolute;left:106px;top:1586px;width:1280px;height:2px;box-sizing:border-box;background:#0c3d45;"></div>
<div style="position:absolute;left:1300px;top:1603px;width:60px;height:29px;overflow:hidden"><svg style="position:absolute;left:10.5px;top:6.6px" width="27" height="26" viewBox="0 0 27 26" ><defs><linearGradient id="fo26" x1="0" y1="0" x2="1" y2="1"><stop offset="0" stop-color="#d3dade"/><stop offset="1" stop-color="#b4bcc2"/></linearGradient>
<linearGradient id="fb26" x1="0" y1="0" x2="0" y2="1"><stop offset="0" stop-color="#8c9aa4"/><stop offset="1" stop-color="#627684"/></linearGradient></defs>
<path d="M0,4.4 Q0,3.7 .7,3.5 L9.2,1.3 Q9.8,1.2 10,1.8 L10.3,2.6 L22.2,0.1 Q23,0 23,.8 L23,12 L2.2,25.7 L0.3,24.3 Z" fill="url(#fb26)"/>
<path d="M0.3,5 L0.5,24 L2,25.4 L1.8,8 Z" fill="#aeb9c0"/>
<path d="M5.2,11.4 Q5.4,10.5 6.3,10.3 L25.8,5.9 Q27,5.8 26.8,7 L23.7,19.4 Q23.5,20.2 22.7,20.4 L2.8,25.6 Q1.8,25.8 2,24.8 Z" fill="url(#fo26)"/></svg></div>
<div style="position:absolute;left:1378.7px;top:1332px;width:4px;height:112px;box-sizing:border-box;background:#8c8c8c;"></div>
<svg style="position:absolute;left:1488px;top:1172px" width="32" height="32" viewBox="0 0 32 33" ><path d="M16.6,17.4 L28.6,31 L26.4,32.6 L15,19 Z" fill="#2f3c41"/>
<path d="M13.4,14 L17.6,18.2 L15.6,19.8 L11.6,15.4 Z" fill="#b9c3c8"/>
<path d="M1,8.8 Q1.6,7.4 3.4,7.4 L4.6,6.4 Q7,2 12,0.8 Q15,0.4 17.6,1.2 Q13.6,2.4 12.2,5.6 L13.6,8.6 L14.4,13 L11.4,14.6 L9.2,10.6 L6,11.4 L5.2,12.6 Q2.6,12.8 1.4,11 Z" fill="#b4bcc1"/>
<ellipse cx="2.6" cy="9.6" rx="1.9" ry="2.3" fill="#f2f6f8"/>
<path d="M10,1.8 Q13,0.6 16.6,1.2 Q13.6,2 12.6,3.8 Z" fill="#9fd0f0"/>
<path d="M26.6,1 Q22.6,1.6 20.6,5 Q19.4,8 21,10.6 L5.4,27.6 Q3.6,30 5.4,31.4 Q7.4,32.6 9.4,30.6 L24,13.6 Q27.6,14.4 29.8,11.8 Q31.6,9 31,5.4 Q29,9.6 26,9.4 Q22.8,8.2 23.8,5 Q24.6,2.6 26.6,1 Z" fill="#b0b8bd"/>
<path d="M20.4,11.6 L6.4,27 L7.2,27.8 L21.4,12.4 Z" fill="#e8eef1"/>
<ellipse cx="7" cy="29.4" rx="1.5" ry="1.2" transform="rotate(-45 7 29.4)" fill="#03131a"/></svg>
<div style="position:absolute;left:1488px;top:1278px;width:1284px;height:400px;box-sizing:border-box;border:2px solid #0c3d45;"></div>
<div style="position:absolute;left:1490px;top:1342px;width:1280px;height:2px;box-sizing:border-box;background:#2a3b40;"></div>
<div style="position:absolute;left:2078.7px;top:1280px;width:1.5px;height:63px;box-sizing:border-box;background:#33444a;"></div>
<div style="position:absolute;left:2373.7px;top:1280px;width:1.5px;height:63px;box-sizing:border-box;background:#33444a;"></div>
<div style="position:absolute;left:2668.7px;top:1280px;width:1.5px;height:63px;box-sizing:border-box;background:#33444a;"></div>
<svg style="position:absolute;left:2695px;top:1365.6px" width="27" height="26" viewBox="0 0 27 26" ><defs><linearGradient id="fo27" x1="0" y1="0" x2="1" y2="1"><stop offset="0" stop-color="#d3dade"/><stop offset="1" stop-color="#b4bcc2"/></linearGradient>
<linearGradient id="fb27" x1="0" y1="0" x2="0" y2="1"><stop offset="0" stop-color="#8c9aa4"/><stop offset="1" stop-color="#627684"/></linearGradient></defs>
<path d="M0,4.4 Q0,3.7 .7,3.5 L9.2,1.3 Q9.8,1.2 10,1.8 L10.3,2.6 L22.2,0.1 Q23,0 23,.8 L23,12 L2.2,25.7 L0.3,24.3 Z" fill="url(#fb27)"/>
<path d="M0.3,5 L0.5,24 L2,25.4 L1.8,8 Z" fill="#aeb9c0"/>
<path d="M5.2,11.4 Q5.4,10.5 6.3,10.3 L25.8,5.9 Q27,5.8 26.8,7 L23.7,19.4 Q23.5,20.2 22.7,20.4 L2.8,25.6 Q1.8,25.8 2,24.8 Z" fill="url(#fo27)"/></svg>
<div style="position:absolute;left:1490px;top:1414px;width:1280px;height:2px;box-sizing:border-box;background:#0c3d45;"></div>
<svg style="position:absolute;left:2695px;top:1437.6px" width="27" height="26" viewBox="0 0 27 26" ><defs><linearGradient id="fo28" x1="0" y1="0" x2="1" y2="1"><stop offset="0" stop-color="#d3dade"/><stop offset="1" stop-color="#b4bcc2"/></linearGradient>
<linearGradient id="fb28" x1="0" y1="0" x2="0" y2="1"><stop offset="0" stop-color="#8c9aa4"/><stop offset="1" stop-color="#627684"/></linearGradient></defs>
<path d="M0,4.4 Q0,3.7 .7,3.5 L9.2,1.3 Q9.8,1.2 10,1.8 L10.3,2.6 L22.2,0.1 Q23,0 23,.8 L23,12 L2.2,25.7 L0.3,24.3 Z" fill="url(#fb28)"/>
<path d="M0.3,5 L0.5,24 L2,25.4 L1.8,8 Z" fill="#aeb9c0"/>
<path d="M5.2,11.4 Q5.4,10.5 6.3,10.3 L25.8,5.9 Q27,5.8 26.8,7 L23.7,19.4 Q23.5,20.2 22.7,20.4 L2.8,25.6 Q1.8,25.8 2,24.8 Z" fill="url(#fo28)"/></svg>
<div style="position:absolute;left:1490px;top:1486px;width:1280px;height:2px;box-sizing:border-box;background:#0c3d45;"></div>
<svg style="position:absolute;left:2695px;top:1509.6px" width="27" height="26" viewBox="0 0 27 26" ><defs><linearGradient id="fo29" x1="0" y1="0" x2="1" y2="1"><stop offset="0" stop-color="#d3dade"/><stop offset="1" stop-color="#b4bcc2"/></linearGradient>
<linearGradient id="fb29" x1="0" y1="0" x2="0" y2="1"><stop offset="0" stop-color="#8c9aa4"/><stop offset="1" stop-color="#627684"/></linearGradient></defs>
<path d="M0,4.4 Q0,3.7 .7,3.5 L9.2,1.3 Q9.8,1.2 10,1.8 L10.3,2.6 L22.2,0.1 Q23,0 23,.8 L23,12 L2.2,25.7 L0.3,24.3 Z" fill="url(#fb29)"/>
<path d="M0.3,5 L0.5,24 L2,25.4 L1.8,8 Z" fill="#aeb9c0"/>
<path d="M5.2,11.4 Q5.4,10.5 6.3,10.3 L25.8,5.9 Q27,5.8 26.8,7 L23.7,19.4 Q23.5,20.2 22.7,20.4 L2.8,25.6 Q1.8,25.8 2,24.8 Z" fill="url(#fo29)"/></svg>
<div style="position:absolute;left:1490px;top:1558px;width:1280px;height:2px;box-sizing:border-box;background:#0c3d45;"></div>
<svg style="position:absolute;left:2695px;top:1581.6px" width="27" height="26" viewBox="0 0 27 26" ><defs><linearGradient id="fo30" x1="0" y1="0" x2="1" y2="1"><stop offset="0" stop-color="#d3dade"/><stop offset="1" stop-color="#b4bcc2"/></linearGradient>
<linearGradient id="fb30" x1="0" y1="0" x2="0" y2="1"><stop offset="0" stop-color="#8c9aa4"/><stop offset="1" stop-color="#627684"/></linearGradient></defs>
<path d="M0,4.4 Q0,3.7 .7,3.5 L9.2,1.3 Q9.8,1.2 10,1.8 L10.3,2.6 L22.2,0.1 Q23,0 23,.8 L23,12 L2.2,25.7 L0.3,24.3 Z" fill="url(#fb30)"/>
<path d="M0.3,5 L0.5,24 L2,25.4 L1.8,8 Z" fill="#aeb9c0"/>
<path d="M5.2,11.4 Q5.4,10.5 6.3,10.3 L25.8,5.9 Q27,5.8 26.8,7 L23.7,19.4 Q23.5,20.2 22.7,20.4 L2.8,25.6 Q1.8,25.8 2,24.8 Z" fill="url(#fo30)"/></svg>
<div style="position:absolute;left:1490px;top:1630px;width:1280px;height:2px;box-sizing:border-box;background:#0c3d45;"></div>
<div style="position:absolute;left:2685px;top:1647px;width:60px;height:29px;overflow:hidden"><svg style="position:absolute;left:10px;top:6.6px" width="27" height="26" viewBox="0 0 27 26" ><defs><linearGradient id="fo31" x1="0" y1="0" x2="1" y2="1"><stop offset="0" stop-color="#d3dade"/><stop offset="1" stop-color="#b4bcc2"/></linearGradient>
<linearGradient id="fb31" x1="0" y1="0" x2="0" y2="1"><stop offset="0" stop-color="#8c9aa4"/><stop offset="1" stop-color="#627684"/></linearGradient></defs>
<path d="M0,4.4 Q0,3.7 .7,3.5 L9.2,1.3 Q9.8,1.2 10,1.8 L10.3,2.6 L22.2,0.1 Q23,0 23,.8 L23,12 L2.2,25.7 L0.3,24.3 Z" fill="url(#fb31)"/>
<path d="M0.3,5 L0.5,24 L2,25.4 L1.8,8 Z" fill="#aeb9c0"/>
<path d="M5.2,11.4 Q5.4,10.5 6.3,10.3 L25.8,5.9 Q27,5.8 26.8,7 L23.7,19.4 Q23.5,20.2 22.7,20.4 L2.8,25.6 Q1.8,25.8 2,24.8 Z" fill="url(#fo31)"/></svg></div>
<div style="position:absolute;left:2762px;top:1376px;width:4px;height:32px;box-sizing:border-box;background:#8c8c8c;"></div>
<div style="position:absolute;left:2798px;top:306px;width:4px;height:1342px;box-sizing:border-box;background:#8c8c8c;"></div>
<div style="position:absolute;left:0px;top:1696px;width:2878px;height:32px;box-sizing:border-box;background:#02090c;"></div>
<div style="position:absolute;left:0px;top:1728px;width:2878px;height:68px;box-sizing:border-box;background:#021419;"></div>
<div style="position:absolute;left:0px;top:1728px;width:2878px;height:2px;box-sizing:border-box;background:#0c3d45;"></div>
<span style="position:absolute;left:132.67px;top:31.79px;font-size:41.6px;line-height:41.6px;color:#d9f8ff;white-space:pre;font-weight:bold;letter-spacing:-0.256px;-webkit-text-stroke:0.7px #d9f8ff;">WinTrim</span>
<span style="position:absolute;left:132.80px;top:79.50px;font-size:25.4px;line-height:25.4px;color:#5be0ea;white-space:pre;letter-spacing:0.036px;-webkit-text-stroke:0.4px #5be0ea;">Analyze and optimize your storage</span>
<span style="position:absolute;left:868.65px;top:45.01px;font-size:30.0px;line-height:30.0px;color:#d9f8ff;white-space:pre;letter-spacing:-0.041px;-webkit-text-stroke:0.75px #d9f8ff;">Macintosh HD</span>
<span style="position:absolute;left:1074.25px;top:45.01px;font-size:30.0px;line-height:30.0px;color:#5be0ea;white-space:pre;letter-spacing:-0.338px;-webkit-text-stroke:0.4px #5be0ea;">Local Disk</span>
<span style="position:absolute;left:1220.65px;top:45.01px;font-size:30.0px;line-height:30.0px;color:#2b7f8a;white-space:pre;letter-spacing:1.950px;-webkit-text-stroke:0.4px #2b7f8a;">-</span>
<div style="position:absolute;left:1242.15px;top:41.01px;width:91.45px;height:47.0px;overflow:hidden"><span style="position:absolute;left:0.00px;top:4.00px;font-size:30.0px;line-height:30.0px;color:#ff7a12;white-space:pre;letter-spacing:-1.914px;-webkit-text-stroke:0.4px #ff7a12;">1.81 TB</span></div>
<span style="position:absolute;left:1540.65px;top:51.81px;font-size:30.0px;line-height:30.0px;color:#ffffff;white-space:pre;letter-spacing:-0.571px;-webkit-text-stroke:0.4px #ffffff;">Express</span>
<span style="position:absolute;left:1744.65px;top:51.81px;font-size:30.0px;line-height:30.0px;color:#d9f8ff;white-space:pre;letter-spacing:-0.299px;-webkit-text-stroke:0.4px #d9f8ff;">Browse</span>
<span style="position:absolute;left:2436.65px;top:52.20px;font-size:30.0px;line-height:30.0px;color:#f0ffff;white-space:pre;font-weight:bold;letter-spacing:-0.660px;-webkit-text-stroke:0.5px #f0ffff;">Start Scan</span>
<span style="position:absolute;left:2705.65px;top:51.11px;font-size:30.0px;line-height:30.0px;color:#d9f8ff;white-space:pre;letter-spacing:-0.885px;-webkit-text-stroke:0.4px #d9f8ff;">Recall</span>
<span style="position:absolute;left:173.25px;top:195.27px;font-size:50.0px;line-height:50.0px;color:#d9f8ff;white-space:pre;letter-spacing:1.139px;-webkit-text-stroke:1.0px #d9f8ff;">Overview</span>
<span style="position:absolute;left:553.25px;top:195.27px;font-size:50.0px;line-height:50.0px;color:#5be0ea;white-space:pre;letter-spacing:0.697px;-webkit-text-stroke:1.0px #5be0ea;">Cleanup</span>
<span style="position:absolute;left:905.00px;top:195.27px;font-size:50.0px;line-height:50.0px;color:#5be0ea;white-space:pre;letter-spacing:0.414px;-webkit-text-stroke:1.0px #5be0ea;">Treemap</span>
<span style="position:absolute;left:1267.75px;top:195.27px;font-size:50.0px;line-height:50.0px;color:#5be0ea;white-space:pre;letter-spacing:0.167px;-webkit-text-stroke:1.0px #5be0ea;">File Explorer</span>
<span style="position:absolute;left:1713.75px;top:195.27px;font-size:50.0px;line-height:50.0px;color:#5be0ea;white-space:pre;letter-spacing:0.476px;-webkit-text-stroke:1.0px #5be0ea;">Largest Files</span>
<span style="position:absolute;left:103.05px;top:341.88px;font-size:34.4px;line-height:34.4px;color:#d9f8ff;white-space:pre;font-weight:bold;letter-spacing:-0.922px;">File Categories</span>
<span style="position:absolute;left:568.76px;top:342.00px;font-size:30.0px;line-height:30.0px;color:#d9f8ff;white-space:pre;font-weight:bold;letter-spacing:-0.900px;">Video</span>
<span style="position:absolute;left:658.35px;top:342.00px;font-size:30.0px;line-height:30.0px;color:#5be0ea;white-space:pre;letter-spacing:-0.347px;-webkit-text-stroke:0.4px #5be0ea;">(100 files)</span>
<span style="position:absolute;left:147.40px;top:717.91px;font-size:22.2px;line-height:22.2px;color:#5be0ea;white-space:pre;letter-spacing:0.357px;-webkit-text-stroke:0.35px #5be0ea;">Other (668.41 GB)</span>
<span style="position:absolute;left:348.07px;top:719.26px;font-size:20.6px;line-height:20.6px;color:#3a8a92;white-space:pre;letter-spacing:0.597px;">(953969 files)</span>
<span style="position:absolute;left:148.22px;top:761.91px;font-size:22.2px;line-height:22.2px;color:#5be0ea;white-space:pre;letter-spacing:0.203px;-webkit-text-stroke:0.35px #5be0ea;">Video (165.65 GB)</span>
<span style="position:absolute;left:346.27px;top:763.26px;font-size:20.6px;line-height:20.6px;color:#3a8a92;white-space:pre;letter-spacing:0.460px;">(2950 files)</span>
<span style="position:absolute;left:147.40px;top:805.91px;font-size:22.2px;line-height:22.2px;color:#5be0ea;white-space:pre;letter-spacing:-0.101px;-webkit-text-stroke:0.35px #5be0ea;">Image (75.10 GB)</span>
<span style="position:absolute;left:334.27px;top:807.26px;font-size:20.6px;line-height:20.6px;color:#3a8a92;white-space:pre;letter-spacing:0.304px;">(128459 files)</span>
<span style="position:absolute;left:148.22px;top:849.91px;font-size:22.2px;line-height:22.2px;color:#5be0ea;white-space:pre;letter-spacing:0.002px;-webkit-text-stroke:0.35px #5be0ea;">Audio (11.36 GB)</span>
<span style="position:absolute;left:330.47px;top:851.26px;font-size:20.6px;line-height:20.6px;color:#3a8a92;white-space:pre;letter-spacing:-0.176px;">(1417 files)</span>
<span style="position:absolute;left:147.40px;top:893.91px;font-size:22.2px;line-height:22.2px;color:#5be0ea;white-space:pre;letter-spacing:0.151px;-webkit-text-stroke:0.35px #5be0ea;">Code (10.22 GB)</span>
<span style="position:absolute;left:330.47px;top:895.26px;font-size:20.6px;line-height:20.6px;color:#3a8a92;white-space:pre;letter-spacing:0.420px;">(752305 files)</span>
<span style="position:absolute;left:148.22px;top:937.91px;font-size:22.2px;line-height:22.2px;color:#5be0ea;white-space:pre;letter-spacing:0.011px;-webkit-text-stroke:0.35px #5be0ea;">Archive (7.87 GB)</span>
<span style="position:absolute;left:338.07px;top:939.26px;font-size:20.6px;line-height:20.6px;color:#3a8a92;white-space:pre;letter-spacing:0.224px;">(1835 files)</span>
<span style="position:absolute;left:147.40px;top:981.91px;font-size:22.2px;line-height:22.2px;color:#5be0ea;white-space:pre;letter-spacing:0.354px;-webkit-text-stroke:0.35px #5be0ea;">Executable (4.22 GB)</span>
<span style="position:absolute;left:378.07px;top:983.26px;font-size:20.6px;line-height:20.6px;color:#3a8a92;white-space:pre;letter-spacing:0.209px;">(12820 files)</span>
<span style="position:absolute;left:147.40px;top:1025.91px;font-size:22.2px;line-height:22.2px;color:#5be0ea;white-space:pre;letter-spacing:0.181px;-webkit-text-stroke:0.35px #5be0ea;">Document (4.19 GB)</span>
<span style="position:absolute;left:366.37px;top:1027.26px;font-size:20.6px;line-height:20.6px;color:#3a8a92;white-space:pre;letter-spacing:0.351px;">(15394 files)</span>
<span style="position:absolute;left:585.05px;top:547.61px;font-size:30.0px;line-height:30.0px;color:#5be0ea;white-space:pre;font-weight:bold;letter-spacing:-0.870px;">Name</span>
<span style="position:absolute;left:1062.45px;top:547.61px;font-size:30.0px;line-height:30.0px;color:#5be0ea;white-space:pre;font-weight:bold;letter-spacing:-0.865px;">Size</span>
<div style="position:absolute;left:1300.65px;top:543.61px;width:5.35px;height:47.0px;overflow:hidden"><span style="position:absolute;left:0.00px;top:4.00px;font-size:30.0px;line-height:30.0px;color:#5be0ea;white-space:pre;font-weight:bold;letter-spacing:-1.328px;">Open</span></div>
<span style="position:absolute;left:609.25px;top:616.61px;font-size:30.0px;line-height:30.0px;color:#ffffff;white-space:pre;letter-spacing:-1.392px;-webkit-text-stroke:0.4px #ffffff;">IMG_2126.MOV</span>
<span style="position:absolute;left:1086.65px;top:616.61px;font-size:30.0px;line-height:30.0px;color:#ffffff;white-space:pre;letter-spacing:-0.695px;-webkit-text-stroke:0.4px #ffffff;">941.65 MB</span>
<span style="position:absolute;left:609.25px;top:692.61px;font-size:30.0px;line-height:30.0px;color:#ffffff;white-space:pre;letter-spacing:-1.757px;-webkit-text-stroke:0.4px #ffffff;">IMG_1635 1.MOV</span>
<span style="position:absolute;left:1086.65px;top:692.61px;font-size:30.0px;line-height:30.0px;color:#ffffff;white-space:pre;letter-spacing:-0.604px;-webkit-text-stroke:0.4px #ffffff;">627.53 MB</span>
<span style="position:absolute;left:609.25px;top:768.61px;font-size:30.0px;line-height:30.0px;color:#ffffff;white-space:pre;letter-spacing:-1.771px;-webkit-text-stroke:0.4px #ffffff;">IMG_1758.MOV</span>
<span style="position:absolute;left:1086.65px;top:768.61px;font-size:30.0px;line-height:30.0px;color:#ffffff;white-space:pre;letter-spacing:-0.213px;-webkit-text-stroke:0.4px #ffffff;">354.78 MB</span>
<span style="position:absolute;left:609.25px;top:844.61px;font-size:30.0px;line-height:30.0px;color:#ffffff;white-space:pre;letter-spacing:-1.714px;-webkit-text-stroke:0.4px #ffffff;">IMG_1764.MOV</span>
<span style="position:absolute;left:1086.65px;top:844.61px;font-size:30.0px;line-height:30.0px;color:#ffffff;white-space:pre;letter-spacing:-1.566px;-webkit-text-stroke:0.4px #ffffff;">315.61 MB</span>
<div style="position:absolute;left:609.25px;top:920.61px;width:600px;height:6.39px;overflow:hidden"><span style="position:absolute;left:0.00px;top:0.00px;font-size:30.0px;line-height:30.0px;color:#ffffff;white-space:pre;letter-spacing:-1.293px;-webkit-text-stroke:0.4px #ffffff;">IMG_1636 2.MOV</span></div>
<div style="position:absolute;left:1086.65px;top:920.61px;width:600px;height:6.39px;overflow:hidden"><span style="position:absolute;left:0.00px;top:0.00px;font-size:30.0px;line-height:30.0px;color:#ffffff;white-space:pre;letter-spacing:-1.480px;-webkit-text-stroke:0.4px #ffffff;">312.31 MB</span></div>
<span style="position:absolute;left:1487.45px;top:341.88px;font-size:34.4px;line-height:34.4px;color:#d9f8ff;white-space:pre;font-weight:bold;letter-spacing:-1.269px;">Largest Folders</span>
<span style="position:absolute;left:1505.65px;top:502.61px;font-size:30.0px;line-height:30.0px;color:#5be0ea;white-space:pre;font-weight:bold;letter-spacing:-0.870px;">Name</span>
<span style="position:absolute;left:1864.25px;top:502.61px;font-size:30.0px;line-height:30.0px;color:#5be0ea;white-space:pre;font-weight:bold;letter-spacing:-0.865px;">Size</span>
<div style="position:absolute;left:2042.65px;top:498.61px;width:5.35px;height:47.0px;overflow:hidden"><span style="position:absolute;left:0.00px;top:4.00px;font-size:30.0px;line-height:30.0px;color:#5be0ea;white-space:pre;font-weight:bold;letter-spacing:-1.328px;">Open</span></div>
<span style="position:absolute;left:1569.65px;top:581.61px;font-size:30.0px;line-height:30.0px;color:#d9f8ff;white-space:pre;letter-spacing:-0.090px;-webkit-text-stroke:0.4px #d9f8ff;">immutable</span>
<div style="position:absolute;left:1888.65px;top:577.61px;width:131.75px;height:47.0px;overflow:hidden"><span style="position:absolute;left:0.00px;top:4.00px;font-size:30.0px;line-height:30.0px;color:#ffffff;white-space:pre;letter-spacing:-0.660px;-webkit-text-stroke:0.4px #ffffff;">206.77 GB</span></div>
<span style="position:absolute;left:1569.65px;top:651.61px;font-size:30.0px;line-height:30.0px;color:#d9f8ff;white-space:pre;letter-spacing:-0.467px;-webkit-text-stroke:0.4px #d9f8ff;">Parallels</span>
<div style="position:absolute;left:1888.65px;top:647.61px;width:131.75px;height:47.0px;overflow:hidden"><span style="position:absolute;left:0.00px;top:4.00px;font-size:30.0px;line-height:30.0px;color:#ffffff;white-space:pre;letter-spacing:-0.955px;-webkit-text-stroke:0.4px #ffffff;">140.30 GB</span></div>
<span style="position:absolute;left:1570.76px;top:721.61px;font-size:30.0px;line-height:30.0px;color:#d9f8ff;white-space:pre;letter-spacing:-0.403px;-webkit-text-stroke:0.4px #d9f8ff;">Windows 10.pvm</span>
<div style="position:absolute;left:1888.65px;top:717.61px;width:131.75px;height:47.0px;overflow:hidden"><span style="position:absolute;left:0.00px;top:4.00px;font-size:30.0px;line-height:30.0px;color:#ffffff;white-space:pre;letter-spacing:-0.955px;-webkit-text-stroke:0.4px #ffffff;">140.30 GB</span></div>
<span style="position:absolute;left:1570.76px;top:791.61px;font-size:30.0px;line-height:30.0px;color:#d9f8ff;white-space:pre;letter-spacing:-0.050px;-webkit-text-stroke:0.4px #d9f8ff;">Windows 10-0.hdd</span>
<div style="position:absolute;left:1888.65px;top:787.61px;width:131.75px;height:47.0px;overflow:hidden"><span style="position:absolute;left:0.00px;top:4.00px;font-size:30.0px;line-height:30.0px;color:#ffffff;white-space:pre;letter-spacing:-1.611px;-webkit-text-stroke:0.4px #ffffff;">137.80 GB</span></div>
<span style="position:absolute;left:1569.65px;top:861.61px;font-size:30.0px;line-height:30.0px;color:#d9f8ff;white-space:pre;letter-spacing:-0.072px;-webkit-text-stroke:0.4px #d9f8ff;">models</span>
<div style="position:absolute;left:1888.65px;top:857.61px;width:131.75px;height:47.0px;overflow:hidden"><span style="position:absolute;left:0.00px;top:4.00px;font-size:30.0px;line-height:30.0px;color:#ffffff;white-space:pre;letter-spacing:-1.279px;-webkit-text-stroke:0.4px #ffffff;">102.74 GB</span></div>
<span style="position:absolute;left:1569.65px;top:931.61px;font-size:30.0px;line-height:30.0px;color:#d9f8ff;white-space:pre;letter-spacing:-0.116px;-webkit-text-stroke:0.4px #d9f8ff;">Pictures</span>
<div style="position:absolute;left:1888.65px;top:927.61px;width:131.75px;height:47.0px;overflow:hidden"><span style="position:absolute;left:0.00px;top:4.00px;font-size:30.0px;line-height:30.0px;color:#ffffff;white-space:pre;letter-spacing:-0.817px;-webkit-text-stroke:0.4px #ffffff;">76.86 GB</span></div>
<span style="position:absolute;left:2161.65px;top:341.91px;font-size:30.0px;line-height:30.0px;color:#d9f8ff;white-space:pre;font-weight:bold;letter-spacing:-1.061px;">Parallels</span>
<span style="position:absolute;left:2179.05px;top:559.61px;font-size:30.0px;line-height:30.0px;color:#5be0ea;white-space:pre;font-weight:bold;letter-spacing:-0.870px;">Name</span>
<span style="position:absolute;left:2583.15px;top:559.61px;font-size:30.0px;line-height:30.0px;color:#5be0ea;white-space:pre;font-weight:bold;letter-spacing:-0.865px;">Size</span>
<span style="position:absolute;left:2204.26px;top:624.31px;font-size:30.0px;line-height:30.0px;color:#ffffff;white-space:pre;letter-spacing:-0.403px;-webkit-text-stroke:0.4px #ffffff;">Windows 10.pvm</span>
<span style="position:absolute;left:2607.25px;top:624.31px;font-size:30.0px;line-height:30.0px;color:#ffffff;white-space:pre;letter-spacing:-0.955px;-webkit-text-stroke:0.4px #ffffff;">140.30 GB</span>
<span style="position:absolute;left:2203.15px;top:690.61px;font-size:30.0px;line-height:30.0px;color:#ffffff;white-space:pre;letter-spacing:-1.168px;-webkit-text-stroke:0.4px #ffffff;">.DS_Store</span>
<span style="position:absolute;left:2607.25px;top:690.61px;font-size:30.0px;line-height:30.0px;color:#ffffff;white-space:pre;letter-spacing:-0.438px;-webkit-text-stroke:0.4px #ffffff;">6.00 KB</span>
<span style="position:absolute;left:167.65px;top:1170.88px;font-size:34.4px;line-height:34.4px;color:#d9f8ff;white-space:pre;font-weight:bold;letter-spacing:-1.086px;">Game Installations</span>
<span style="position:absolute;left:121.15px;top:1252.61px;font-size:30.0px;line-height:30.0px;color:#5be0ea;white-space:pre;font-weight:bold;letter-spacing:-0.870px;">Name</span>
<span style="position:absolute;left:710.95px;top:1252.61px;font-size:30.0px;line-height:30.0px;color:#5be0ea;white-space:pre;font-weight:bold;letter-spacing:-0.865px;">Size</span>
<span style="position:absolute;left:1006.25px;top:1252.61px;font-size:30.0px;line-height:30.0px;color:#5be0ea;white-space:pre;font-weight:bold;letter-spacing:-1.153px;">Last Played</span>
<div style="position:absolute;left:1300.65px;top:1248.61px;width:5.35px;height:47.0px;overflow:hidden"><span style="position:absolute;left:0.00px;top:4.00px;font-size:30.0px;line-height:30.0px;color:#5be0ea;white-space:pre;font-weight:bold;letter-spacing:-1.328px;">Open</span></div>
<span style="position:absolute;left:145.65px;top:1319.61px;font-size:30.0px;line-height:30.0px;color:#ffffff;white-space:pre;letter-spacing:-0.314px;-webkit-text-stroke:0.4px #ffffff;">Fallout New Vegas</span>
<span style="position:absolute;left:735.15px;top:1319.61px;font-size:30.0px;line-height:30.0px;color:#ffffff;white-space:pre;letter-spacing:-0.648px;-webkit-text-stroke:0.4px #ffffff;">9.23 GB</span>
<span style="position:absolute;left:1030.45px;top:1319.61px;font-size:30.0px;line-height:30.0px;color:#ffffff;white-space:pre;letter-spacing:0.243px;-webkit-text-stroke:0.4px #ffffff;">Just now</span>
<span style="position:absolute;left:145.65px;top:1391.61px;font-size:30.0px;line-height:30.0px;color:#ffffff;white-space:pre;letter-spacing:-0.277px;-webkit-text-stroke:0.4px #ffffff;">Steamworks Shared</span>
<span style="position:absolute;left:735.15px;top:1391.61px;font-size:30.0px;line-height:30.0px;color:#ffffff;white-space:pre;letter-spacing:-1.748px;-webkit-text-stroke:0.4px #ffffff;">111.27 MB</span>
<span style="position:absolute;left:1030.45px;top:1391.61px;font-size:30.0px;line-height:30.0px;color:#ffffff;white-space:pre;letter-spacing:0.243px;-webkit-text-stroke:0.4px #ffffff;">Just now</span>
<span style="position:absolute;left:145.65px;top:1463.61px;font-size:30.0px;line-height:30.0px;color:#ffffff;white-space:pre;letter-spacing:-0.351px;-webkit-text-stroke:0.4px #ffffff;">Kerbal Space Program</span>
<span style="position:absolute;left:735.15px;top:1463.61px;font-size:30.0px;line-height:30.0px;color:#ffffff;white-space:pre;letter-spacing:-1.169px;-webkit-text-stroke:0.4px #ffffff;">8.21 MB</span>
<span style="position:absolute;left:1030.45px;top:1463.61px;font-size:30.0px;line-height:30.0px;color:#ffffff;white-space:pre;letter-spacing:-0.484px;-webkit-text-stroke:0.4px #ffffff;">1 minute(s) ago</span>
<span style="position:absolute;left:145.65px;top:1535.61px;font-size:30.0px;line-height:30.0px;color:#ffffff;white-space:pre;letter-spacing:-0.416px;-webkit-text-stroke:0.4px #ffffff;">Baldurs Gate 3</span>
<span style="position:absolute;left:735.15px;top:1535.61px;font-size:30.0px;line-height:30.0px;color:#ffffff;white-space:pre;letter-spacing:-0.506px;-webkit-text-stroke:0.4px #ffffff;">743.02 KB</span>
<span style="position:absolute;left:1030.45px;top:1535.61px;font-size:30.0px;line-height:30.0px;color:#ffffff;white-space:pre;letter-spacing:-0.484px;-webkit-text-stroke:0.4px #ffffff;">1 minute(s) ago</span>
<div style="position:absolute;left:145.65px;top:1607.61px;width:600px;height:24.39px;overflow:hidden"><span style="position:absolute;left:0.00px;top:0.00px;font-size:30.0px;line-height:30.0px;color:#ffffff;white-space:pre;letter-spacing:-0.306px;-webkit-text-stroke:0.4px #ffffff;">Crusader Kings III</span></div>
<div style="position:absolute;left:735.15px;top:1607.61px;width:600px;height:24.39px;overflow:hidden"><span style="position:absolute;left:0.00px;top:0.00px;font-size:30.0px;line-height:30.0px;color:#ffffff;white-space:pre;letter-spacing:-0.373px;-webkit-text-stroke:0.4px #ffffff;">36.02 KB</span></div>
<div style="position:absolute;left:1030.45px;top:1607.61px;width:600px;height:24.39px;overflow:hidden"><span style="position:absolute;left:0.00px;top:0.00px;font-size:30.0px;line-height:30.0px;color:#ffffff;white-space:pre;letter-spacing:-0.484px;-webkit-text-stroke:0.4px #ffffff;">1 minute(s) ago</span></div>
<span style="position:absolute;left:1551.45px;top:1170.48px;font-size:34.4px;line-height:34.4px;color:#d9f8ff;white-space:pre;font-weight:bold;letter-spacing:-1.207px;">Developer Tools &amp; Caches</span>
<span style="position:absolute;left:1487.35px;top:1235.39px;font-size:23.4px;line-height:23.4px;color:#5be0ea;white-space:pre;letter-spacing:0.078px;-webkit-text-stroke:0.4px #5be0ea;">Large caches from development tools that can be safely cleaned</span>
<span style="position:absolute;left:1505.25px;top:1296.61px;font-size:30.0px;line-height:30.0px;color:#5be0ea;white-space:pre;font-weight:bold;letter-spacing:-0.870px;">Name</span>
<span style="position:absolute;left:2094.95px;top:1296.61px;font-size:30.0px;line-height:30.0px;color:#5be0ea;white-space:pre;font-weight:bold;letter-spacing:-0.865px;">Size</span>
<span style="position:absolute;left:2390.65px;top:1296.61px;font-size:30.0px;line-height:30.0px;color:#5be0ea;white-space:pre;font-weight:bold;letter-spacing:-1.143px;">Last Used</span>
<div style="position:absolute;left:2684.65px;top:1292.61px;width:5.35px;height:47.0px;overflow:hidden"><span style="position:absolute;left:0.00px;top:4.00px;font-size:30.0px;line-height:30.0px;color:#5be0ea;white-space:pre;font-weight:bold;letter-spacing:-1.328px;">Open</span></div>
<span style="position:absolute;left:1529.45px;top:1363.61px;font-size:30.0px;line-height:30.0px;color:#ffffff;white-space:pre;letter-spacing:-0.238px;-webkit-text-stroke:0.4px #ffffff;">Xcode DerivedData</span>
<span style="position:absolute;left:2119.65px;top:1363.61px;font-size:30.0px;line-height:30.0px;color:#ffffff;white-space:pre;letter-spacing:-0.429px;-webkit-text-stroke:0.4px #ffffff;">28.90 GB</span>
<span style="position:absolute;left:2414.65px;top:1363.61px;font-size:30.0px;line-height:30.0px;color:#ffffff;white-space:pre;letter-spacing:-0.008px;-webkit-text-stroke:0.4px #ffffff;">Unknown</span>
<span style="position:absolute;left:1529.45px;top:1435.61px;font-size:30.0px;line-height:30.0px;color:#ffffff;white-space:pre;letter-spacing:-0.564px;-webkit-text-stroke:0.4px #ffffff;">NPM Cache</span>
<span style="position:absolute;left:2119.65px;top:1435.61px;font-size:30.0px;line-height:30.0px;color:#ffffff;white-space:pre;letter-spacing:-0.456px;-webkit-text-stroke:0.4px #ffffff;">4.04 GB</span>
<span style="position:absolute;left:2414.65px;top:1435.61px;font-size:30.0px;line-height:30.0px;color:#ffffff;white-space:pre;letter-spacing:-0.008px;-webkit-text-stroke:0.4px #ffffff;">Unknown</span>
<span style="position:absolute;left:1529.45px;top:1507.61px;font-size:30.0px;line-height:30.0px;color:#ffffff;white-space:pre;letter-spacing:-0.339px;-webkit-text-stroke:0.4px #ffffff;">CocoaPods Cache</span>
<span style="position:absolute;left:2119.65px;top:1507.61px;font-size:30.0px;line-height:30.0px;color:#ffffff;white-space:pre;letter-spacing:-0.805px;-webkit-text-stroke:0.4px #ffffff;">913.65 MB</span>
<span style="position:absolute;left:2414.65px;top:1507.61px;font-size:30.0px;line-height:30.0px;color:#ffffff;white-space:pre;letter-spacing:-0.008px;-webkit-text-stroke:0.4px #ffffff;">Unknown</span>
<span style="position:absolute;left:1529.45px;top:1579.61px;font-size:30.0px;line-height:30.0px;color:#ffffff;white-space:pre;letter-spacing:-0.434px;-webkit-text-stroke:0.4px #ffffff;">NuGet Package Cache</span>
<span style="position:absolute;left:2119.65px;top:1579.61px;font-size:30.0px;line-height:30.0px;color:#ffffff;white-space:pre;letter-spacing:0.020px;-webkit-text-stroke:0.4px #ffffff;">872.46 MB</span>
<span style="position:absolute;left:2414.65px;top:1579.61px;font-size:30.0px;line-height:30.0px;color:#ffffff;white-space:pre;letter-spacing:-0.008px;-webkit-text-stroke:0.4px #ffffff;">Unknown</span>
<div style="position:absolute;left:1529.45px;top:1651.61px;width:600px;height:24.39px;overflow:hidden"><span style="position:absolute;left:0.00px;top:0.00px;font-size:30.0px;line-height:30.0px;color:#ffffff;white-space:pre;letter-spacing:-0.310px;-webkit-text-stroke:0.4px #ffffff;">node_modules</span></div>
<div style="position:absolute;left:2119.65px;top:1651.61px;width:600px;height:24.39px;overflow:hidden"><span style="position:absolute;left:0.00px;top:0.00px;font-size:30.0px;line-height:30.0px;color:#ffffff;white-space:pre;letter-spacing:-0.486px;-webkit-text-stroke:0.4px #ffffff;">441.34 MB</span></div>
<div style="position:absolute;left:2414.65px;top:1651.61px;width:600px;height:24.39px;overflow:hidden"><span style="position:absolute;left:0.00px;top:0.00px;font-size:30.0px;line-height:30.0px;color:#ffffff;white-space:pre;letter-spacing:-0.008px;-webkit-text-stroke:0.4px #ffffff;">Unknown</span></div>
<span style="position:absolute;left:45.05px;top:1748.11px;font-size:30.0px;line-height:30.0px;color:#5be0ea;white-space:pre;letter-spacing:-0.167px;-webkit-text-stroke:0.4px #5be0ea;">Scan complete: 1,918,659 files, 524,425 folders</span>
<span style="position:absolute;left:2567.65px;top:1748.11px;font-size:30.0px;line-height:30.0px;color:#3a8a92;white-space:pre;letter-spacing:-0.494px;-webkit-text-stroke:0.4px #3a8a92;">Scan time: 00:01:18</span>
</div>
</body></html>
